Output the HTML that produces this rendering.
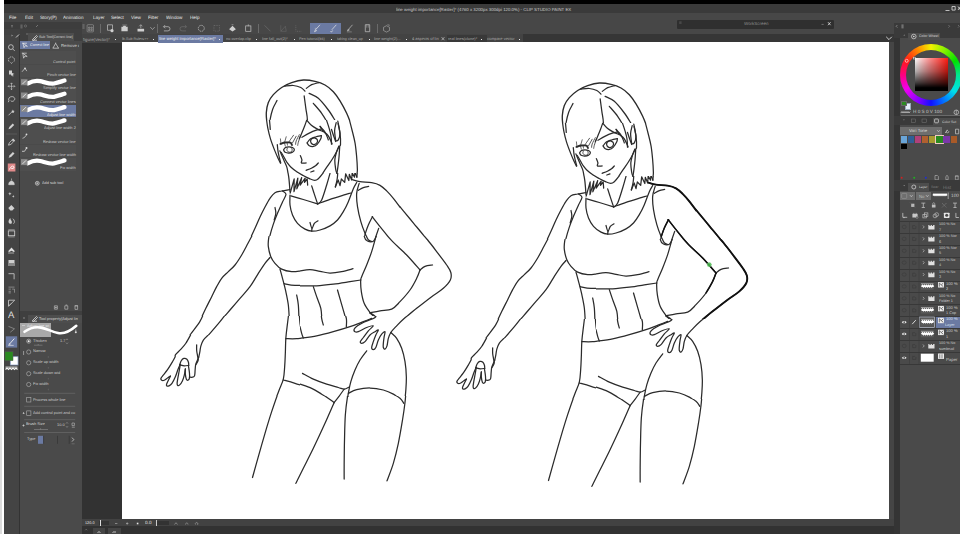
<!DOCTYPE html>
<html><head><meta charset="utf-8"><title>CLIP STUDIO PAINT</title>
<style>
*{margin:0;padding:0;box-sizing:border-box}
html,body{width:960px;height:534px;overflow:hidden;background:#333;font-family:"Liberation Sans",sans-serif;color:#ddd}
.a{position:absolute}
.t{position:absolute;white-space:nowrap;font-size:20px;line-height:23px;color:#d8d8d8;transform-origin:0 0;text-rendering:geometricPrecision}
svg{position:absolute;overflow:visible}
</style></head><body>
<!-- base blocks -->
<div class="a" style="left:0;top:0;width:960px;height:4px;background:#000"></div>
<div class="a" style="left:0;top:4px;width:960px;height:9px;background:#3a3a3a"></div>
<div class="a" style="left:0;top:13px;width:960px;height:21px;background:#474747"></div>
<div class="a" style="left:82px;top:34px;width:440.5px;height:8.5px;background:#434343"></div>
<div class="a" style="left:522.5px;top:34px;width:371.5px;height:8.5px;background:#363636"></div>
<div class="a" style="left:0;top:0;width:3.6px;height:534px;background:#fff"></div><div class="a" style="left:0;top:330px;width:1.6px;height:204px;background:linear-gradient(#fff,#dcdcdc 60%)"></div>
<div class="a" style="left:3.6px;top:22px;width:15.9px;height:512px;background:#444"></div>
<div class="a" style="left:19.5px;top:22px;width:62.5px;height:512px;background:#4a4a4a"></div>
<div class="a" style="left:82px;top:42.5px;width:40.5px;height:477px;background:#323232"></div>
<!-- canvas -->
<div class="a" style="left:122.3px;top:42.4px;width:766.9px;height:476.9px;background:#fff"></div>
<div class="a" style="left:889.2px;top:42.4px;width:4.7px;height:477px;background:#454545"></div>
<div class="a" style="left:82px;top:519.3px;width:812px;height:6.9px;background:#424242"></div>
<div class="a" style="left:82px;top:526px;width:818px;height:8px;background:#323232"></div>
<div class="a" style="left:893.9px;top:34px;width:6.1px;height:500px;background:#343434"></div>
<div class="a" style="left:900px;top:22.5px;width:60px;height:511.5px;background:#4a4a4a"></div>
<span class="t" style="left:395.80px;top:6.69px;transform:scale(0.2180);color:#cccccc;">line weight importance[Raster]* (4760 x 3200px 300dpi 120.0%) - CLIP STUDIO PAINT EX</span>
<svg style="left:944.0px;top:5.0px" width="16" height="7" viewBox="0 0 16 7" fill="none" stroke="#cfcfcf" stroke-width="1" ><path d="M1.5 5.5h4M8 1.5h3.2v3.6H8zM14 1.5l2.5 3.5M16.5 1.5L14 5" stroke="#ddd" stroke-width=".8"/></svg>
<span class="t" style="left:9.00px;top:15.25px;transform:scale(0.2300);color:#e6e6e6;">File</span>
<span class="t" style="left:24.50px;top:15.25px;transform:scale(0.2300);color:#e6e6e6;">Edit</span>
<span class="t" style="left:39.50px;top:15.25px;transform:scale(0.2300);color:#e6e6e6;">Story(P)</span>
<span class="t" style="left:63.00px;top:15.25px;transform:scale(0.2300);color:#e6e6e6;">Animation</span>
<span class="t" style="left:92.50px;top:15.25px;transform:scale(0.2300);color:#e6e6e6;">Layer</span>
<span class="t" style="left:110.50px;top:15.25px;transform:scale(0.2300);color:#e6e6e6;">Select</span>
<span class="t" style="left:130.50px;top:15.25px;transform:scale(0.2300);color:#e6e6e6;">View</span>
<span class="t" style="left:148.00px;top:15.25px;transform:scale(0.2300);color:#e6e6e6;">Filter</span>
<span class="t" style="left:165.50px;top:15.25px;transform:scale(0.2300);color:#e6e6e6;">Window</span>
<span class="t" style="left:190.00px;top:15.25px;transform:scale(0.2300);color:#e6e6e6;">Help</span>
<div class="a" style="left:4.0px;top:22.0px;width:78.0px;height:6.5px;background:#3d3d3d;"></div>
<div class="a" style="left:4.0px;top:28.5px;width:78.0px;height:6.0px;background:#414141;"></div>
<div class="a" style="left:310.0px;top:22.5px;width:31.0px;height:11.0px;background:#6b7aa2;"></div>
<div class="a" style="left:100.0px;top:23.5px;width:0.7px;height:9.5px;background:#6a6a6a;"></div>
<div class="a" style="left:157.2px;top:23.5px;width:0.7px;height:9.5px;background:#6a6a6a;"></div>
<div class="a" style="left:258.4px;top:23.5px;width:0.7px;height:9.5px;background:#6a6a6a;"></div>
<div class="a" style="left:377.2px;top:23.5px;width:0.7px;height:9.5px;background:#6a6a6a;"></div>
<svg style="left:0.0px;top:0.0px" width="960" height="534" viewBox="0 0 960 534" fill="none" stroke="#cfcfcf" stroke-width="1" ><g stroke-width=".7" stroke="#c4c4c4"><g transform="translate(90.3,28.3)" opacity="1"><rect x="-3.2" y="-3.6" width="6.4" height="7.2" rx=".8" stroke-width=".4"/><path d="M-1.8 -1.2h1.4v1.2h-1.4zM.6 -1.2h1.4v1.2H.6zM-1.8 1h1.4v1.2h-1.4zM.6 1h1.4v1.2H.6z" stroke-width=".4"/></g><g transform="translate(110.0,28.3)" opacity="1"><path d="M-2.5 -3.5h5v5.5h-5z"/><circle cx="2" cy="2.4" r="1.6" fill="#cfcfcf" stroke="none"/></g><g transform="translate(124.7,28.3)" opacity="1"><path d="M-3.3 3v-4.5h1.5l.6-1h2l.6 1h1.6V3z" fill="#cfcfcf" stroke="none"/><path d="M-2.5 -3.3h5" stroke-width=".4"/></g><g transform="translate(140.8,28.3)" opacity="1"><path d="M-3.3 3.2V.5h6.6v2.7z" fill="#cfcfcf" stroke="none"/><path d="M0 -3.5v3.5M-1.6 -2l1.6-1.6L1.6 -2" stroke-width=".6"/></g><g transform="translate(152.5,28.3)" opacity="1"><path d="M-2.2 -1.2L0 1.2l2.2-2.4" stroke-width=".6"/></g><g transform="translate(166.7,28.3)" opacity="1"><path d="M-3 -1.6h4.2a2 2 0 010 4.2h-4M-1.6 -3.2L-3.2 -1.6l1.6 1.6" stroke-width=".7"/></g><g transform="translate(183.3,28.3)" opacity="0.3"><path d="M3 -1.6h-4.2a2 2 0 000 4.2h4M1.6 -3.2L3.2 -1.6 1.6 0" stroke-width=".7"/></g><g transform="translate(201.3,28.3)" opacity="1"><circle r="3" stroke-dasharray="1.6 .7" stroke-width=".7"/></g><g transform="translate(216.7,28.3)" opacity="0.3"><rect x="-2.8" y="-2.8" width="5.6" height="5.6" stroke-dasharray="1.4 1"/></g><g transform="translate(232.5,28.3)" opacity="1"><path d="M-3.4 1l3.4-3.6L3.4 1 0 3.2z" fill="#cfcfcf" stroke="none"/><path d="M-1 -3.6h2" stroke-width=".5"/></g><g transform="translate(248.3,28.3)" opacity="1"><rect x="-2.6" y="-2.4" width="5.2" height="5.4"/><path d="M0 -4v2" stroke-width=".6"/></g><g transform="translate(267.5,28.3)" opacity="0.3"><path d="M-3 -3l6 6"/></g><g transform="translate(283.3,28.3)" opacity="0.3"><path d="M-2.5 3h5.5l-1-5z M-2.5 -3v6" stroke-width=".5"/></g><g transform="translate(298.3,28.3)" opacity="0.3"><path d="M-2.5 -3v6h5.5" stroke-dasharray="1 .8"/></g><g transform="translate(317.5,28.3)" opacity="1"><path d="M-2 1.5l4.5-5M-3 3.4l1-2 1 1z" stroke="#e6e6e6" stroke-width=".7"/><path d="M-2.8 0h2" stroke="#e6e6e6" stroke-width=".4"/></g><g transform="translate(333.3,28.3)" opacity="1"><path d="M-1.5 1.5l4.5-5M-3 2.8c.5 1 2 1 2.4-.6" stroke="#e6e6e6" stroke-width=".7"/></g><g transform="translate(350.0,28.3)" opacity="1"><path d="M-1.5 1l4-4.5M-2.6 2.6l1-1.8 1 1z" stroke-width=".7"/><path d="M-3.2 3.6h5" stroke-width=".4"/></g><g transform="translate(367.5,28.3)" opacity="1"><path d="M-2.2 -3.6h4.4v7h-4.4z"/><path d="M-.8 -3.6v3M.8 -3.6v3" stroke-width=".4"/></g><g transform="translate(386.5,28.3)" opacity="1"><path d="M-3 -1l3-1.6 3 1.6v3.2L0 3.8l-3-1.6z M1 -3.6l2.2.6" stroke-width=".5"/></g></g></svg>
<div class="a" style="left:157.5px;top:35.0px;width:65.5px;height:7.5px;background:#6b7aa2;"></div>
<div class="a" style="left:446.5px;top:34.6px;width:40.5px;height:7.9px;background:#393939;"></div>
<span class="t" style="left:83.30px;top:36.69px;transform:scale(0.2100);color:#a8a8a8;">figure(Vector)*</span>
<div class="a" style="left:115.2px;top:38.5px;width:1.3px;height:1.3px;background:#e8e8e8;"></div>
<span class="t" style="left:121.70px;top:36.97px;transform:scale(0.1850);color:#a8a8a8;">lb.Sub Rulers++</span>
<div class="a" style="left:152.7px;top:38.5px;width:1.3px;height:1.3px;background:#e8e8e8;"></div>
<span class="t" style="left:159.00px;top:36.74px;transform:scale(0.2052);color:#f0f0f0;">line weight importance[Raster]*</span>
<div class="a" style="left:219.1px;top:38.5px;width:1.3px;height:1.3px;background:#e8e8e8;"></div>
<span class="t" style="left:225.80px;top:36.87px;transform:scale(0.1939);color:#a8a8a8;">no overlap.clip</span>
<div class="a" style="left:256.1px;top:38.5px;width:1.3px;height:1.3px;background:#e8e8e8;"></div>
<span class="t" style="left:261.70px;top:36.88px;transform:scale(0.1934);color:#a8a8a8;">line fall_out(2)*</span>
<div class="a" style="left:293.6px;top:38.5px;width:1.3px;height:1.3px;background:#e8e8e8;"></div>
<span class="t" style="left:299.20px;top:36.91px;transform:scale(0.1903);color:#a8a8a8;">Pen tutorial(bk)</span>
<div class="a" style="left:331.1px;top:38.5px;width:1.3px;height:1.3px;background:#e8e8e8;"></div>
<span class="t" style="left:336.70px;top:36.97px;transform:scale(0.1850);color:#a8a8a8;">taking clean_up</span>
<div class="a" style="left:368.6px;top:38.5px;width:1.3px;height:1.3px;background:#e8e8e8;"></div>
<span class="t" style="left:374.20px;top:36.84px;transform:scale(0.1962);color:#a8a8a8;">line weight(2)...</span>
<div class="a" style="left:406.1px;top:38.5px;width:1.3px;height:1.3px;background:#e8e8e8;"></div>
<span class="t" style="left:411.70px;top:36.81px;transform:scale(0.1994);color:#a8a8a8;">4 aspects of lin</span>
<div class="a" style="left:442.4px;top:38.5px;width:1.3px;height:1.3px;background:transparent;"></div>
<span class="t" style="left:448.30px;top:36.85px;transform:scale(0.1960);color:#a8a8a8;">real lines(clone)*</span>
<div class="a" style="left:481.1px;top:38.5px;width:1.3px;height:1.3px;background:#e8e8e8;"></div>
<span class="t" style="left:486.70px;top:36.81px;transform:scale(0.1995);color:#a8a8a8;">compare vector</span>
<div class="a" style="left:518.6px;top:38.5px;width:1.3px;height:1.3px;background:#e8e8e8;"></div>
<svg style="left:440.0px;top:36.0px" width="6" height="6" viewBox="0 0 6 6" fill="none" stroke="#cfcfcf" stroke-width="1" ><path d="M1.6 1.2l2.8 3M4.4 1.2L1.6 4.2" stroke="#ccc" stroke-width=".7"/></svg>
<div class="a" style="left:677.0px;top:19.5px;width:157.0px;height:9.3px;background:#2f2f2f;border-radius:1px"></div>
<span class="t" style="left:743.50px;top:21.43px;transform:scale(0.2234);color:#8a8a8a;">WorkScreen</span>
<svg style="left:820.0px;top:21.0px" width="14" height="6" viewBox="0 0 14 6" fill="none" stroke="#cfcfcf" stroke-width="1" ><path d="M1.5 3.4h2.2" stroke="#999" stroke-width=".6"/><path d="M8 1.2l2.6 3M10.6 1.2L8 4.2" stroke="#ddd" stroke-width=".8"/></svg>
<svg style="left:678.0px;top:21.0px" width="6" height="4" viewBox="0 0 6 4" fill="none" stroke="#cfcfcf" stroke-width="1" ><path d="M1.2 1h2.4M1.2 2.2h2.4" stroke="#777" stroke-width=".5"/></svg>
<svg style="left:884.0px;top:35.0px" width="10" height="7" viewBox="0 0 10 7" fill="none" stroke="#cfcfcf" stroke-width="1" ><path d="M2.2 1.8L5 4.6l2.8-2.8" stroke="#ddd" stroke-width=".9"/></svg>
<span class="t" style="left:85.00px;top:520.82px;transform:scale(0.1898);color:#e0e0e0;">120.0</span>
<div class="a" style="left:98.7px;top:520.6px;width:10.0px;height:4.6px;background:#333;"></div>
<div class="a" style="left:100.0px;top:520.2px;width:0.6px;height:5.4px;background:#ddd;"></div>
<div class="a" style="left:156.0px;top:520.6px;width:12.7px;height:4.6px;background:#333;"></div>
<div class="a" style="left:156.0px;top:520.2px;width:0.6px;height:5.4px;background:#ccc;"></div>
<span class="t" style="left:144.50px;top:520.31px;transform:scale(0.2338);color:#e0e0e0;">0.0</span>
<svg style="left:82.0px;top:519.5px" width="130" height="7" viewBox="0 0 130 7" fill="none" stroke="#cfcfcf" stroke-width="1" ><path d="M33 3.5h2.4M44 3.5h2.4M45.200 2.300v2.400" stroke="#bbb" stroke-width=".6"/><rect x="54.800" y="2.700" width="1.600" height="1.600" fill="#e8e8e8" stroke="none"/><path d="M92.500 4.500l1.500-1.800 1.500 1.800M103.500 4.500c0-2 2.500-2 2.500 0M113.500 4.500a1.300 1.300 0 112 .3" stroke="#aaa" stroke-width=".6"/></svg>
<div class="a" style="left:92.5px;top:528.0px;width:12.5px;height:6.0px;background:#454545;"></div>
<div class="a" style="left:108.0px;top:528.0px;width:13.0px;height:6.0px;background:#454545;"></div>
<svg style="left:82.0px;top:526.0px" width="40" height="8" viewBox="0 0 40 8" fill="none" stroke="#cfcfcf" stroke-width="1" ><path d="M3.200 4.300l1-1.200 1 1.200" stroke="#888" stroke-width=".5"/><path d="M15 6.500h4M16 5.500h2M30 6.500h4M31 5.500h3" stroke="#aaa" stroke-width=".6"/></svg>
<div class="a" style="left:19.5px;top:28.5px;width:62.5px;height:12.3px;background:#3f3f3f;"></div>
<div class="a" style="left:28.3px;top:33.3px;width:45.7px;height:7.5px;background:#4d4d4d;"></div>
<span class="t" style="left:39.00px;top:34.56px;transform:scale(0.1771);color:#d0d0d0;">Sub Tool[Correct line]</span>
<svg style="left:31.0px;top:33.5px" width="8" height="7" viewBox="0 0 8 7" fill="none" stroke="#cfcfcf" stroke-width="1" ><path d="M1.5 5.5l4-4 1 1-4 4zM1 6.2h5" stroke="#d8d8d8" stroke-width=".8"/></svg>
<svg style="left:4.0px;top:22.0px" width="80" height="20" viewBox="0 0 80 20" fill="none" stroke="#cfcfcf" stroke-width="1" ><path d="M7 3.5h2M7 4.8h2M17 2.5v4M18 2.5v4" stroke="#888" stroke-width=".6"/><circle cx="21.5" cy="4" r="1.1" stroke="#888" stroke-width=".5"/><path d="M32 5l2-2" stroke="#999" stroke-width=".6"/><path d="M79 2v5M80 2v5" stroke="#888" stroke-width=".5"/><path d="M7.5 12.5l1.5 1-1.5 1z" fill="#999" stroke="none"/><path d="M12 15.5l3-3" stroke="#ccc" stroke-width="1"/><path d="M22 12h2" stroke="#999" stroke-width=".6"/></svg>
<div class="a" style="left:20.3px;top:40.8px;width:29.7px;height:8.4px;background:#6b7aa2;"></div>
<span class="t" style="left:30.00px;top:42.84px;transform:scale(0.1878);color:#f0f0f0;">Correct line</span>
<svg style="left:21.0px;top:41.5px" width="8" height="7" viewBox="0 0 8 7" fill="none" stroke="#cfcfcf" stroke-width="1" ><path d="M1 1.2h5M2 1.2l1 4.5 1.2-2 2.2.6z" stroke="#e8e8e8" stroke-width=".7"/></svg>
<svg style="left:52.0px;top:41.5px" width="8" height="7" viewBox="0 0 8 7" fill="none" stroke="#cfcfcf" stroke-width="1" ><path d="M1 6l2.6-4.6L6.4 6M.6 6.2h6.4M3.7 .6v1" stroke="#d8d8d8" stroke-width=".7"/></svg>
<span class="t" style="left:60.80px;top:42.54px;transform:scale(0.2139);color:#d0d0d0;clip-path:inset(0 29% 0 0);">Remove dust</span>
<div class="a" style="left:20.3px;top:51.4px;width:55.9px;height:12.5px;background:#4e4e4e;"></div>
<span class="t" style="left:53.41px;top:59.56px;transform:scale(0.1975);color:#c8c8c8;">Control point</span>
<div class="a" style="left:20.3px;top:64.7px;width:55.9px;height:12.5px;background:#4e4e4e;"></div>
<span class="t" style="left:46.82px;top:72.89px;transform:scale(0.1975);color:#c8c8c8;">Pinch vector line</span>
<div class="a" style="left:20.3px;top:78.1px;width:55.9px;height:12.5px;background:#4e4e4e;"></div>
<span class="t" style="left:42.87px;top:86.22px;transform:scale(0.1975);color:#c8c8c8;">Simplify vector line</span>
<div class="a" style="left:20.3px;top:91.4px;width:55.9px;height:12.5px;background:#4e4e4e;"></div>
<span class="t" style="left:40.01px;top:99.55px;transform:scale(0.1975);color:#c8c8c8;">Connect vector lines</span>
<div class="a" style="left:20.3px;top:104.7px;width:55.9px;height:12.5px;background:#6b7aa2;"></div>
<span class="t" style="left:47.26px;top:112.88px;transform:scale(0.1975);color:#e8e8e8;">Adjust line width</span>
<div class="a" style="left:20.3px;top:118.0px;width:55.9px;height:12.5px;background:#4e4e4e;"></div>
<span class="t" style="left:43.96px;top:126.21px;transform:scale(0.1975);color:#c8c8c8;">Adjust line width 2</span>
<div class="a" style="left:20.3px;top:131.4px;width:55.9px;height:12.5px;background:#4e4e4e;"></div>
<span class="t" style="left:43.09px;top:139.54px;transform:scale(0.1975);color:#c8c8c8;">Redraw vector line</span>
<div class="a" style="left:20.3px;top:144.7px;width:55.9px;height:12.5px;background:#4e4e4e;"></div>
<span class="t" style="left:32.77px;top:152.87px;transform:scale(0.1975);color:#c8c8c8;">Redraw vector line width</span>
<div class="a" style="left:20.3px;top:158.0px;width:55.9px;height:12.5px;background:#4e4e4e;"></div>
<span class="t" style="left:60.22px;top:166.20px;transform:scale(0.1975);color:#c8c8c8;">Fix width</span>
<svg style="left:0.0px;top:0.0px" width="960" height="534" viewBox="0 0 960 534" fill="none" stroke="#cfcfcf" stroke-width="1" ><path d="M21.8 53.2h5M22.8 53.2l.8 5 1.3-2.2 2.3.5z" stroke="#ddd" stroke-width=".7"/><path d="M22 71.8l3-3.5 1.8 2.8" stroke="#ddd" stroke-width=".7"/><circle cx="25" cy="68.3" r=".9" fill="#ddd" stroke="none"/><path d="M28 83.3C32 81.1 36 80.3 40 81.1S50 84.3 54 83.5S62 81.2 64.5 80.5" stroke="#fff" stroke-width="4.3" stroke-linecap="round"/><rect x="21" y="79.2" width="6.5" height="6" fill="#8a8a8a" stroke="none"/><path d="M22.5 84.0l3.5-3.5" stroke="#e0e0e0" stroke-width="1"/><path d="M28 96.6C32 94.4 36 93.6 40 94.4S50 97.6 54 96.8S62 94.5 64.5 93.8" stroke="#fff" stroke-width="4.3" stroke-linecap="round"/><rect x="21" y="92.5" width="6.5" height="6" fill="#8a8a8a" stroke="none"/><path d="M22.5 97.3l3.5-3.5" stroke="#e0e0e0" stroke-width="1"/><path d="M28 109.9C32 107.7 36 106.9 40 107.7S50 110.9 54 110.1S62 107.8 64.5 107.1" stroke="#fff" stroke-width="4.3" stroke-linecap="round"/><rect x="21" y="105.8" width="6.5" height="6" fill="#8a8a8a" stroke="none"/><path d="M22.5 110.6l3.5-3.5" stroke="#e0e0e0" stroke-width="1"/><path d="M28 123.2C32 121.0 36 120.2 40 121.0S50 124.2 54 123.4S62 121.1 64.5 120.4" stroke="#fff" stroke-width="4.3" stroke-linecap="round"/><rect x="21" y="119.1" width="6.5" height="6" fill="#8a8a8a" stroke="none"/><path d="M22.5 123.9l3.5-3.5" stroke="#e0e0e0" stroke-width="1"/><path d="M22.5 138.3c2-.5 3.5-2 4-4" stroke="#ddd" stroke-width=".7"/><circle cx="26.5" cy="134.3" r=".9" fill="#ddd" stroke="none"/><path d="M22 151.3h2.5l2-3" stroke="#ddd" stroke-width=".8"/><circle cx="26.5" cy="147.9" r="1" fill="#ddd" stroke="none"/><path d="M28 163.2C32 161.0 36 160.2 40 161.0S50 164.2 54 163.4S62 161.1 64.5 160.4" stroke="#fff" stroke-width="4.3" stroke-linecap="round"/><rect x="21" y="159.1" width="6.5" height="6" fill="#8a8a8a" stroke="none"/><path d="M22.5 163.9l3.5-3.5" stroke="#e0e0e0" stroke-width="1"/></svg>
<svg style="left:35.0px;top:180.5px" width="5" height="5" viewBox="0 0 5 5" fill="none" stroke="#cfcfcf" stroke-width="1" ><circle cx="2.3" cy="2.3" r="1.9" stroke="#e0e0e0" stroke-width=".7"/><path d="M2.3 1.2v2.2M1.2 2.3h2.2" stroke="#e0e0e0" stroke-width=".6"/></svg>
<span class="t" style="left:41.70px;top:180.70px;transform:scale(0.1916);color:#d0d0d0;">Add sub tool</span>
<svg style="left:52.0px;top:304.0px" width="30" height="7" viewBox="0 0 30 7" fill="none" stroke="#cfcfcf" stroke-width="1" ><path d="M2.4 1.8h3v3.4h-3zM3.9 2.6v1.8M3 3.5h1.8M12.8 1.8h3v3.4h-3zM13.6 1h1.6M23 1.8h2.6v3.6H23zM22.6 1.8h3.4" stroke="#c8c8c8" stroke-width=".6"/></svg>
<div class="a" style="left:19.5px;top:311.3px;width:62.5px;height:11.5px;background:#3f3f3f;"></div>
<div class="a" style="left:28.3px;top:314.5px;width:53.7px;height:8.3px;background:#4d4d4d;"></div>
<svg style="left:21.0px;top:314.0px" width="14" height="9" viewBox="0 0 14 9" fill="none" stroke="#cfcfcf" stroke-width="1" ><path d="M2.2 3.2l1.6 1.6M3.8 3.2L2.2 4.8" stroke="#999" stroke-width=".5"/></svg>
<svg style="left:31.0px;top:315.0px" width="8" height="7" viewBox="0 0 8 7" fill="none" stroke="#cfcfcf" stroke-width="1" ><path d="M1.5 5.5l4-4 1 1-4 4zM1 6.2h5" stroke="#d8d8d8" stroke-width=".8"/></svg>
<span class="t" style="left:39.20px;top:316.59px;transform:scale(0.1918);color:#d0d0d0;">Tool property[Adjust lin</span>
<div class="a" style="left:20.3px;top:322.7px;width:56.0px;height:14.0px;background:#4a4a4a;"></div>
<div class="a" style="left:20.3px;top:322.7px;width:30.5px;height:14.0px;background:#a9a9a9;"></div>
<span class="t" style="left:27.00px;top:323.83px;transform:scale(0.1885);color:#e8e8e8;">Adjust line wi</span>
<svg style="left:0.0px;top:0.0px" width="960" height="534" viewBox="0 0 960 534" fill="none" stroke="#cfcfcf" stroke-width="1" ><path d="M24.5 331.8C29 328.5 35 326.6 41 327.6S52 331.8 58 333S71 330.5 76.3 325.8" stroke="#fff" stroke-width="2.6" stroke-linecap="round"/><circle cx="75.8" cy="332.2" r="1" fill="#ddd" stroke="none"/><path d="M75.8 329.5v2" stroke="#ddd" stroke-width=".6"/><path d="M22 325.5h3" stroke="#ddd" stroke-width=".6"/></svg>
<span class="t" style="left:33.30px;top:338.66px;transform:scale(0.1950);color:#cccccc;">Thicken</span>
<span class="t" style="left:33.30px;top:349.46px;transform:scale(0.1950);color:#cccccc;">Narrow</span>
<span class="t" style="left:33.30px;top:360.26px;transform:scale(0.1950);color:#cccccc;">Scale up width</span>
<span class="t" style="left:33.30px;top:371.16px;transform:scale(0.1950);color:#cccccc;">Scale down wid</span>
<span class="t" style="left:33.30px;top:381.96px;transform:scale(0.1950);color:#cccccc;">Fix width</span>
<span class="t" style="left:59.50px;top:339.06px;transform:scale(0.1950);color:#cccccc;">1.7</span>
<span class="t" style="left:33.30px;top:397.76px;transform:scale(0.1950);color:#cccccc;">Process whole line</span>
<span class="t" style="left:33.30px;top:411.06px;transform:scale(0.1950);color:#cccccc;">Add control point and co</span>
<span class="t" style="left:26.30px;top:422.26px;transform:scale(0.1950);color:#d4d4d4;">Brush Size</span>
<span class="t" style="left:56.50px;top:422.56px;transform:scale(0.1950);color:#cccccc;">10.0</span>
<span class="t" style="left:26.70px;top:437.26px;transform:scale(0.1950);color:#cccccc;">Type</span>
<svg style="left:0.0px;top:0.0px" width="960" height="534" viewBox="0 0 960 534" fill="none" stroke="#cfcfcf" stroke-width="1" ><circle cx="28.7" cy="341.2" r="2.1" stroke="#b8b8b8" stroke-width=".6" fill="#5a5a5a"/><circle cx="28.7" cy="341.2" r="1" fill="#f0f0f0" stroke="none"/><circle cx="28.7" cy="352.0" r="2.1" stroke="#b8b8b8" stroke-width=".6" fill="#484848"/><path d="M48.3 356.2v1.6" stroke="#777" stroke-width=".5"/><circle cx="28.7" cy="362.8" r="2.1" stroke="#b8b8b8" stroke-width=".6" fill="#484848"/><path d="M48.3 367.0v1.6" stroke="#777" stroke-width=".5"/><circle cx="28.7" cy="373.7" r="2.1" stroke="#b8b8b8" stroke-width=".6" fill="#484848"/><path d="M48.3 377.9v1.6" stroke="#777" stroke-width=".5"/><circle cx="28.7" cy="384.5" r="2.1" stroke="#b8b8b8" stroke-width=".6" fill="#484848"/><path d="M48.3 388.7v1.6" stroke="#777" stroke-width=".5"/><path d="M34 345.2h8.5M38.2 344v1.2" stroke="#999" stroke-width=".5"/><path d="M66 340l1-1.2 1 1.2M66 342.6l1 1.2 1-1.2" stroke="#aaa" stroke-width=".5"/><path d="M23.6 351v4" stroke="#ccc" stroke-width=".6"/><path d="M24.2 393.3h51" stroke="#6e6e6e" stroke-width=".6"/><path d="M24.2 406.3h51" stroke="#6e6e6e" stroke-width=".6"/><path d="M24.2 419.7h51" stroke="#6e6e6e" stroke-width=".6"/><path d="M24.2 432.5h51" stroke="#6e6e6e" stroke-width=".6"/><rect x="26.7" y="397.6" width="4.2" height="4.4" stroke="#b0b0b0" stroke-width=".6" fill="#484848"/><rect x="26.7" y="410.9" width="4.2" height="4.4" stroke="#b0b0b0" stroke-width=".6" fill="#484848"/><path d="M22.6 413.8l1-1.8 1 1.8z" fill="#ddd" stroke="none"/><path d="M22.4 425.5h2.2M23.5 424.4v2.2" stroke="#ddd" stroke-width=".6"/><path d="M34 429.5h14M40.6 428.2v1.3" stroke="#999" stroke-width=".5"/><path d="M66 423.6l1-1.2 1 1.2M66 426.2l1 1.2 1-1.2" stroke="#aaa" stroke-width=".5"/><path d="M72 423h2.4v2.6H72zM71.8 427.2h3" stroke="#bbb" stroke-width=".6"/><rect x="38" y="435.8" width="5.3" height="8" fill="#6b7aa2" stroke="none"/><path d="M43.6 435.8v8M57.5 435.8v8M69.2 435.8v8" stroke="#333" stroke-width=".7"/><path d="M72 437.6l1.8 2-1.8 2" stroke="#ddd" stroke-width=".7"/><path d="M71.6 443.8h3" stroke="#888" stroke-width=".5"/></svg>
<svg style="left:0.0px;top:0.0px" width="960" height="534" viewBox="0 0 960 534" fill="none" stroke="#cfcfcf" stroke-width="1" ><g transform="translate(11.5,47.7)" opacity="1"><circle cx="-.6" cy="-.6" r="2.4" stroke="#d0d0d0" stroke-width=".8"/><path d="M1.2 1.2l2 2" stroke="#d0d0d0" stroke-width=".8"/></g><g transform="translate(11.5,60.0)" opacity="1"><path d="M-2.5 1.5a3 3 0 115 0" stroke="#d0d0d0" stroke-width=".8" stroke-dasharray="1.5 .8"/><path d="M-1 2.5l1 .8 1-.8" stroke="#d0d0d0" stroke-width=".8"/></g><g transform="translate(11.5,73.0)" opacity="1"><path d="M-2.5 -2.5h3v4h-3zM-.5 -.5l3.5 1.5-1.6.6L2 3.2l-.8.4-.6-1.6-1.1 1z" fill="#d0d0d0" stroke="none"/></g><g transform="translate(11.5,86.3)" opacity="1"><path d="M0 -3.4v6.8M-3.4 0h6.8M-1 -2.4l1-1 1 1M-1 2.4l1 1 1-1M-2.4 -1l-1 1 1 1M2.4 -1l1 1-1 1" stroke="#d0d0d0" stroke-width=".6"/></g><g transform="translate(11.5,99.0)" opacity="1"><path d="M-2.6 1.6c-1-2 .6-4 3-4s3.6 2 2.4 3.6-3 1.4-3.6.4" stroke="#d0d0d0" stroke-width=".8"/><path d="M-2.6 1.600l-.6 1.600" stroke="#d0d0d0" stroke-width=".8"/></g><g transform="translate(11.5,112.3)" opacity="1"><path d="M-3 3l3.4-3.4" stroke="#d0d0d0" stroke-width=".8"/><path d="M1.4 -2.8l.5 1.200 1.300.2-1 .9.300 1.300-1.100-.700-1.100.700.300-1.300-1-.9 1.300-.2z" fill="#d0d0d0" stroke="none"/></g><g transform="translate(11.5,126.0)" opacity="1"><path d="M-3 3.2l.8-2.200 3.400-3.600 1.500 1.500-3.500 3.500z" fill="#d0d0d0" stroke="none"/></g><path d="M6 134h11" stroke="#6a6a6a" stroke-width=".6"/><g transform="translate(11.5,142.0)" opacity="1"><path d="M-3 3.200l.8-2.400 2.600-2.600 1.600 1.600-2.600 2.600zM.8 -2.200l1.600 1.600" stroke="#d0d0d0" stroke-width=".8"/><path d="M.4 -2.600l1.200-1 2 2-1 1.200z" fill="#d0d0d0" stroke="none"/></g><g transform="translate(11.5,155.0)" opacity="1"><path d="M-3 3.200l1.200-3 3.200-3.200 1.600 1.600-3.200 3.200z" fill="#d0d0d0" stroke="none"/><path d="M-3 3.200l1-1" stroke="#444" stroke-width=".5"/></g><rect x="7.800" y="163.500" width="7.600" height="8" fill="#e08a8a" stroke="none"/><path d="M9.500 169.500c1.500-4 4-4 4.500-2.500s-2 2-3 1" stroke="#fff" stroke-width=".9"/><g transform="translate(11.5,181.7)" opacity="1"><path d="M0 -3.200v2M-2.800 3c0-2.400 1.200-3.600 2.800-3.600s2.800 1.200 2.800 3.600z" fill="#d0d0d0" stroke="#d0d0d0" stroke-width=".6"/></g><g transform="translate(11.5,194.7)" opacity="1"><path d="M-1.600 -2.600l.5 1.200 1.200.5-1.200.5-.5 1.200-.5-1.200-1.200-.5 1.200-.5zM1.800 .4l.4.900.9.400-.9.400-.4.900-.4-.9-.9-.4.900-.4z" fill="#d0d0d0" stroke="none"/></g><g transform="translate(11.5,207.3)" opacity="1"><path d="M-3.200 .8l3-3 3.200 3.200-2.200 2.200h-2z" fill="#d0d0d0" stroke="none"/></g><g transform="translate(11.5,220.7)" opacity="1"><path d="M-1.600 3c-2-1-1.600-3.600.4-5.800 0 2 1.600 2.400 1.600 4.200s-1 2-2 1.600z" fill="#d0d0d0" stroke="none"/><path d="M1.400 -2c1.600 1.400 2.200 3.600 .6 5" stroke="#d0d0d0" stroke-width=".8"/></g><g transform="translate(11.5,233.3)" opacity="1"><rect x="-3.200" y="-2.400" width="6.400" height="4.800" stroke="#d0d0d0" stroke-width=".8"/><path d="M-3.200 -3.600h6.400M-3.200 3.600h6.400" stroke="#d0d0d0" stroke-width=".5"/></g><g transform="translate(11.5,250.0)" opacity="1"><path d="M-3.400 1.200l3.400-3.600 3.400 3.600-1 .8-2.400-1.200-2.400 1.200z" fill="#e0e0e0" stroke="none"/><path d="M-3.400 3h6" stroke="#d0d0d0" stroke-width=".7"/></g><g transform="translate(11.5,263.0)" opacity="1"><rect x="-3" y="-3" width="6" height="6" fill="#cfcfcf" stroke="none"/><rect x="-3" y="0" width="6" height="3" fill="#8a8a8a" stroke="none"/></g><g transform="translate(11.5,276.3)" opacity="1"><path d="M-3 -2.600h5.600v5.600" stroke="#d0d0d0" stroke-width=".8"/></g><g transform="translate(11.5,289.7)" opacity="1"><path d="M-3 -2.600h6M-3 -.6h2.400M.6 -.6h2.400v3.600M-3 1.600h2.400M-3 3.200h2.400" stroke="#b0b0b0" stroke-width=".6"/></g><g transform="translate(11.5,303.0)" opacity="1"><path d="M-3 3.200v-6h6.200z" stroke="#d0d0d0" stroke-width=".8"/><path d="M-3 3.200l3-3" stroke="#d0d0d0" stroke-width=".5"/></g><rect x="5.800" y="336.300" width="11.400" height="11.300" fill="#6b7aa2" stroke="none"/><g transform="translate(11.5,329.0)" opacity="1"><path d="M-3 -2.600l6 2.400-4.200 3.400" stroke="#9a9a9a" stroke-width=".7"/></g><g transform="translate(11.5,342.0)" opacity="1"><path d="M-1.600 1.600l4.400-5" stroke="#f0f0f0" stroke-width=".9"/><path d="M-3.400 3.400h5.600M-2.600 2.800l.6-1.600 1 1z" stroke="#f0f0f0" stroke-width=".6"/></g><rect x="10.300" y="356.700" width="7.700" height="8.300" fill="#fff" stroke="#8ea0c8" stroke-width=".7"/><rect x="5" y="351.700" width="8" height="9" fill="#2a8a20" stroke="#555" stroke-width=".5"/><path d="M5.500 369.500l1.500-1.500 1.500 1.500 1.500-1.500 1.500 1.500 1.500-1.500 1.500 1.500 1.500-1.500 1.500 1.500" stroke="#f4f4f4" stroke-width="1.200"/><rect x="5.500" y="366.600" width="12" height="1" fill="#e0e0e0" stroke="none"/></svg>
<span class="t" style="left:8.30px;top:310.24px;transform:scale(0.4750);color:#dcdcdc;">A</span>
<div class="a" style="left:894.0px;top:22.5px;width:66.0px;height:15.8px;background:#3a3a3a;"></div>
<svg style="left:894.0px;top:23.0px" width="66" height="9" viewBox="0 0 66 9" fill="none" stroke="#cfcfcf" stroke-width="1" ><path d="M3.4 2l-1.300 1.300 1.300 1.300M8 1.400v4M9 1.400v4" stroke="#aaa" stroke-width=".6"/><path d="M54.400 2l1.300 1.300-1.300 1.300M64 2l1.300 1.300-1.300 1.300" stroke="#888" stroke-width=".6"/></svg>
<div class="a" style="left:908.3px;top:33.3px;width:31.7px;height:6.4px;background:#4d4d4d;"></div>
<svg style="left:902.0px;top:33.0px" width="14" height="7" viewBox="0 0 14 7" fill="none" stroke="#cfcfcf" stroke-width="1" ><path d="M1.400 2.600l.9-1.200.9 1.200z" fill="#999" stroke="none"/><circle cx="11.800" cy="3.500" r="2.300" stroke="#ddd" stroke-width=".7"/><circle cx="11.800" cy="3.500" r=".8" fill="#ddd" stroke="none"/></svg>
<span class="t" style="left:919.20px;top:34.46px;transform:scale(0.1772);color:#d0d0d0;">Color Wheel</span>
<div class="a" style="left:900.2px;top:44px;width:62px;height:62px;border-radius:50%;background:conic-gradient(from 0deg at 50% 50%,#f2f200 0deg,#7ff000 30deg,#00e000 60deg,#00e890 90deg,#00e0e8 125deg,#0080ff 150deg,#1010ff 180deg,#8000ff 205deg,#f000f0 240deg,#ff0080 270deg,#ff1a1a 300deg,#ff8000 330deg,#f2f200 360deg)"></div>
<div class="a" style="left:905.9px;top:49.700px;width:50.6px;height:50.6px;border-radius:50%;background:#4a4a4a"></div>
<div class="a" style="left:915px;top:57.800px;width:33px;height:33.2px;background:linear-gradient(to bottom,rgba(0,0,0,0) 0%,rgba(0,0,0,.3) 40%,rgba(0,0,0,.75) 75%,#000 90%,#000 100%),linear-gradient(to right,#fff 0%,#ff9a9a 40%,#ff1a10 100%)"></div>
<svg style="left:900.0px;top:40.0px" width="60" height="70" viewBox="0 0 60 70" fill="none" stroke="#cfcfcf" stroke-width="1" ><circle cx="6.700" cy="20.800" r="1.500" stroke="#fff" stroke-width=".6"/><rect x="13.600" y="17.200" width="1.800" height="1.800" stroke="#eee" stroke-width=".5"/></svg>
<div class="a" style="left:905.0px;top:103.2px;width:5.8px;height:6.6px;background:#e6eef8;border:0.6px solid #9ab"></div>
<div class="a" style="left:901.3px;top:100.7px;width:5.4px;height:5.8px;background:#2a8a20;border:0.5px solid #666"></div>
<svg style="left:900.0px;top:110.0px" width="12" height="4" viewBox="0 0 12 4" fill="none" stroke="#cfcfcf" stroke-width="1" ><path d="M1 2.800l1-1.200 1 1.200 1-1.200 1 1.200 1-1.200 1 1.200 1-1.200 1 1.200 1-1.200" stroke="#eee" stroke-width=".8"/></svg>
<span class="t" style="left:913.30px;top:109.12px;transform:scale(0.2331);color:#c8c8c8;">H   0 S   0 V 100</span>
<svg style="left:952.5px;top:108.5px" width="7" height="7" viewBox="0 0 7 7" fill="none" stroke="#cfcfcf" stroke-width="1" ><circle cx="3.300" cy="3.300" r="2.300" stroke="#ccc" stroke-width=".7"/><path d="M3.300 1v4.600" stroke="#ccc" stroke-width=".6"/></svg>
<div class="a" style="left:900.5px;top:114.8px;width:59.5px;height:0.6px;background:#6a6a6a;"></div>
<div class="a" style="left:894.0px;top:116.2px;width:66.0px;height:9.0px;background:#3a3a3a;"></div>
<div class="a" style="left:933.0px;top:118.0px;width:27.0px;height:7.2px;background:#4d4d4d;"></div>
<svg style="left:900.0px;top:117.0px" width="60" height="8" viewBox="0 0 60 8" fill="none" stroke="#cfcfcf" stroke-width="1" ><path d="M3 2.400l.9 1.200.9-1.200z" fill="#888" stroke="none"/><rect x="11.300" y="2" width="4.400" height="3.400" stroke="#777" stroke-width=".5"/><rect x="22" y="2" width="4.400" height="3.400" stroke="#777" stroke-width=".5"/><rect x="34.600" y="2" width="3.800" height="3.800" rx=".8" stroke="#ddd" stroke-width=".7"/></svg>
<span class="t" style="left:941.70px;top:119.85px;transform:scale(0.1691);color:#d0d0d0;">Color Set</span>
<div class="a" style="left:900.3px;top:126.5px;width:41.4px;height:8.3px;background:#6e6e6e;"></div>
<span class="t" style="left:909.20px;top:128.15px;transform:scale(0.2214);color:#d8d8d8;">Vari Tone</span>
<svg style="left:935.0px;top:127.5px" width="26" height="7" viewBox="0 0 26 7" fill="none" stroke="#cfcfcf" stroke-width="1" ><path d="M2.200 2.200l1.300 1.500 1.300-1.500" stroke="#ddd" stroke-width=".6"/><path d="M10 5l2.800-2.800M12.800 2.200a1.300 1.300 0 101 1" stroke="#bbb" stroke-width=".8"/><path d="M20.500 1.200h3.200v4.600h-3.200z" stroke="#ccc" stroke-width=".7"/></svg>
<div class="a" style="left:900.8px;top:136.2px;width:6.3px;height:6.5px;background:#6aa5d8;"></div>
<div class="a" style="left:907.9px;top:136.2px;width:6.3px;height:6.5px;background:#2f5f96;"></div>
<div class="a" style="left:915.0px;top:136.2px;width:6.3px;height:6.5px;background:#b0407a;"></div>
<div class="a" style="left:922.1px;top:136.2px;width:6.3px;height:6.5px;background:#b06030;"></div>
<div class="a" style="left:929.2px;top:136.2px;width:6.3px;height:6.5px;background:#a89a30;"></div>
<div class="a" style="left:936.3px;top:136.2px;width:6.3px;height:6.5px;background:#2a8a20;outline:0.7px solid #f0c8c0;"></div>
<div class="a" style="left:943.4px;top:136.2px;width:6.3px;height:6.5px;background:#7a38a8;"></div>
<div class="a" style="left:950.5px;top:136.2px;width:6.3px;height:6.5px;background:#a85a28;"></div>
<div class="a" style="left:900.8px;top:143.7px;width:6.2px;height:5.6px;background:#000;"></div>
<svg style="left:900.0px;top:174.0px" width="60" height="8" viewBox="0 0 60 8" fill="none" stroke="#cfcfcf" stroke-width="1" ><circle cx="1.700" cy="3.700" r="1" fill="#d02020" stroke="none"/><circle cx="14.200" cy="3.700" r="1" fill="#20b020" stroke="none"/><circle cx="25.800" cy="3.700" r="1" fill="#2030d0" stroke="none"/><path d="M35 1.500h2.400l1 1v3.300H35zM45.500 5.500h3M47 1.200c-1.200 1-1.500 2.500-1 4M47 1.200c1.200 1 1.500 2.500 1 4M55.400 2h2.800v3.800h-2.800zM55 2h3.600" stroke="#bbb" stroke-width=".6"/></svg>
<div class="a" style="left:894.0px;top:180.3px;width:66.0px;height:10.6px;background:#3a3a3a;"></div>
<div class="a" style="left:908.3px;top:182.5px;width:21.0px;height:8.4px;background:#4d4d4d;"></div>
<svg style="left:900.0px;top:182.0px" width="60" height="9" viewBox="0 0 60 9" fill="none" stroke="#cfcfcf" stroke-width="1" ><path d="M3.300 3l.9 1.200.9-1.200z" fill="#888" stroke="none"/><circle cx="13.800" cy="5" r="2" stroke="#ddd" stroke-width=".7"/></svg>
<span class="t" style="left:919.20px;top:185.39px;transform:scale(0.1659);color:#d0d0d0;">Layer</span>
<span class="t" style="left:931.00px;top:185.26px;transform:scale(0.1775);color:#777;">Sear</span>
<span class="t" style="left:942.50px;top:184.63px;transform:scale(0.2323);color:#777;">Hist</span>
<div class="a" style="left:900.3px;top:191.5px;width:14.4px;height:8.8px;background:#6e6e6e;"></div>
<div class="a" style="left:916.3px;top:191.5px;width:14.5px;height:8.8px;background:#6e6e6e;"></div>
<svg style="left:900.0px;top:191.0px" width="60" height="10" viewBox="0 0 60 10" fill="none" stroke="#cfcfcf" stroke-width="1" ><rect x="1.700" y="2.400" width="5" height="5" rx=".8" stroke="#999" stroke-width=".6"/><path d="M10 4.200l1.300 1.500 1.300-1.500M26 4.200l1.300 1.500 1.300-1.500" stroke="#ddd" stroke-width=".6"/><path d="M33 4.400l1-1.200 1 1.200 1-1.200 1 1.200 1-1.200 1 1.200 1-1.200 1 1.200 1-1.200 1 1.200 1-1.200 1 1.200 1-1.200 1 1.200" stroke="#fff" stroke-width="1.500"/><path d="M48.200 1.500v6.500" stroke="#ddd" stroke-width=".6"/></svg>
<span class="t" style="left:919.00px;top:193.53px;transform:scale(0.2151);color:#bbb;">No</span>
<span class="t" style="left:950.50px;top:192.74px;transform:scale(0.2398);color:#c8c8c8;">100</span>
<svg style="left:0.0px;top:0.0px" width="960" height="534" viewBox="0 0 960 534" fill="none" stroke="#cfcfcf" stroke-width="1" ><g transform="translate(912.8,205.300)"><rect x="-1.600" y="-1.600" width="3.200" height="3.200" fill="#bdbdbd" stroke="none"/><path d="M-2.600 -2.600l5.200 5.200" stroke="#888" stroke-width=".5" stroke-dasharray=".8 .6"/></g><g transform="translate(923.3,205.300)"><path d="M-2 -2.200h4M0 -2.200v4.400M-1.600 2.200h3.200" stroke="#bdbdbd" stroke-width=".8"/></g><g transform="translate(933.7,205.300)"><rect x="-1.800" y="-.6" width="3.600" height="2.800" fill="#bdbdbd" stroke="none"/><path d="M-1 -.6v-1a1 1 0 012 0v1" stroke="#bdbdbd" stroke-width=".6"/></g><g transform="translate(944.2,205.300)"><path d="M-2 -2l4 4M2 -2l-4 4" stroke="#9a9a9a" stroke-width=".6" stroke-dasharray="1 .6"/></g><g transform="translate(955.0,205.300)"><path d="M-2 -2.200h4M0 -2.200v4.400M-1.600 2.200h3.200" stroke="#bdbdbd" stroke-width=".8"/></g><g transform="translate(905,215.300)"><path d="M-2.200 -2.400v4.400h4.400" stroke="#c8c8c8" stroke-width=".8"/><circle cx="-1" cy="2.300" r=".7" fill="#c8c8c8" stroke="none"/></g><g transform="translate(915,215.300)"><path d="M-2.600 -1.400h5.200v3.600h-5.200z" fill="#c8c8c8" stroke="none"/><path d="M-1.600 -1.400v-1M0 -1.400v-1M1.600 -1.400v-1" stroke="#c8c8c8" stroke-width=".6"/><circle cx="2" cy="2" r="1.100" fill="#4a4a4a" stroke="#c8c8c8" stroke-width=".4"/></g><g transform="translate(925.3,215.300)"><rect x="-2.400" y="-.8" width="3.400" height="3.400" stroke="#c8c8c8" stroke-width=".6"/><rect x="-.8" y="-2.400" width="3.400" height="3.400" stroke="#c8c8c8" stroke-width=".6"/></g><g transform="translate(935.8,215.300)"><circle cx="-.8" cy=".6" r="1.900" stroke="#c8c8c8" stroke-width=".6"/><circle cx=".9" cy="-.7" r="1.900" stroke="#c8c8c8" stroke-width=".6"/></g><g transform="translate(946.7,215.300)"><rect x="-2.800" y="-2.600" width="5.600" height="5.200" rx=".6" fill="#e8e8e8" stroke="none"/><circle r="1.500" fill="#4a4a4a" stroke="none"/></g><g transform="translate(957.5,215.300)"><path d="M-1.600 -2.400v4.600h3" stroke="#c8c8c8" stroke-width=".8"/></g></svg>
<div class="a" style="left:900.0px;top:221.0px;width:60.0px;height:11.9px;background:#4a4a4a;border-top:0.7px solid #383838"></div>
<span class="t" style="left:939.20px;top:222.37px;transform:scale(0.1856);color:#c8c8c8;">100 % No</span>
<span class="t" style="left:939.20px;top:227.62px;transform:scale(0.1900);color:#c8c8c8;">7</span>
<div class="a" style="left:900.0px;top:232.9px;width:60.0px;height:11.9px;background:#4a4a4a;border-top:0.7px solid #383838"></div>
<span class="t" style="left:939.20px;top:234.23px;transform:scale(0.1884);color:#c8c8c8;">100 % Nor</span>
<span class="t" style="left:939.20px;top:239.52px;transform:scale(0.1900);color:#c8c8c8;">6</span>
<div class="a" style="left:900.0px;top:244.8px;width:60.0px;height:11.9px;background:#4a4a4a;border-top:0.7px solid #383838"></div>
<span class="t" style="left:939.20px;top:246.13px;transform:scale(0.1884);color:#c8c8c8;">100 % Nor</span>
<span class="t" style="left:939.20px;top:251.42px;transform:scale(0.1900);color:#c8c8c8;">5</span>
<div class="a" style="left:900.0px;top:256.7px;width:60.0px;height:11.9px;background:#4a4a4a;border-top:0.7px solid #383838"></div>
<span class="t" style="left:939.20px;top:258.07px;transform:scale(0.1856);color:#c8c8c8;">100 % No</span>
<span class="t" style="left:939.20px;top:263.31px;transform:scale(0.1900);color:#c8c8c8;">4</span>
<div class="a" style="left:900.0px;top:268.6px;width:60.0px;height:11.9px;background:#4a4a4a;border-top:0.7px solid #383838"></div>
<span class="t" style="left:939.20px;top:269.97px;transform:scale(0.1856);color:#c8c8c8;">100 % No</span>
<span class="t" style="left:939.20px;top:275.21px;transform:scale(0.1900);color:#c8c8c8;">3</span>
<div class="a" style="left:900.0px;top:280.5px;width:60.0px;height:11.9px;background:#4a4a4a;border-top:0.7px solid #383838"></div>
<span class="t" style="left:946.00px;top:281.77px;transform:scale(0.2028);color:#c8c8c8;">100 %</span>
<span class="t" style="left:946.00px;top:287.31px;transform:scale(0.1900);color:#c8c8c8;">2</span>
<div class="a" style="left:900.0px;top:292.4px;width:60.0px;height:11.9px;background:#4a4a4a;border-top:0.7px solid #383838"></div>
<span class="t" style="left:939.20px;top:293.77px;transform:scale(0.1856);color:#c8c8c8;">100 % No</span>
<span class="t" style="left:939.20px;top:299.01px;transform:scale(0.1900);color:#c8c8c8;">Folder 1</span>
<div class="a" style="left:900.0px;top:304.3px;width:60.0px;height:11.9px;background:#4a4a4a;border-top:0.7px solid #383838"></div>
<span class="t" style="left:946.00px;top:305.57px;transform:scale(0.2028);color:#c8c8c8;">100 %</span>
<span class="t" style="left:946.00px;top:311.11px;transform:scale(0.1900);color:#c8c8c8;">1 Cop</span>
<div class="a" style="left:900.0px;top:316.2px;width:60.0px;height:11.9px;background:#4a4a4a;border-top:0.7px solid #383838"></div>
<div class="a" style="left:935.5px;top:316.8px;width:24.5px;height:11.1px;background:#6b7aa2;"></div>
<span class="t" style="left:946.00px;top:317.47px;transform:scale(0.2028);color:#dde3f0;">100 %</span>
<span class="t" style="left:945.00px;top:323.01px;transform:scale(0.1900);color:#dde3f0;">Layer</span>
<div class="a" style="left:900.0px;top:328.1px;width:60.0px;height:11.9px;background:#4a4a4a;border-top:0.7px solid #383838"></div>
<span class="t" style="left:946.00px;top:329.37px;transform:scale(0.2028);color:#c8c8c8;">100 %</span>
<span class="t" style="left:946.00px;top:334.91px;transform:scale(0.1900);color:#c8c8c8;">1</span>
<div class="a" style="left:900.0px;top:340.0px;width:60.0px;height:11.9px;background:#4a4a4a;border-top:0.7px solid #383838"></div>
<span class="t" style="left:939.20px;top:341.37px;transform:scale(0.1856);color:#c8c8c8;">100 % No</span>
<span class="t" style="left:939.20px;top:346.61px;transform:scale(0.1900);color:#c8c8c8;">sumbnail</span>
<div class="a" style="left:900.0px;top:351.9px;width:60.0px;height:11.9px;background:#4a4a4a;border-top:0.7px solid #383838"></div>
<span class="t" style="left:946.00px;top:357.42px;transform:scale(0.2155);color:#c8c8c8;">Paper</span>
<div class="a" style="left:900.0px;top:363.8px;width:60.0px;height:0.7px;background:#383838;"></div>
<svg style="left:0.0px;top:0.0px" width="960" height="534" viewBox="0 0 960 534" fill="none" stroke="#cfcfcf" stroke-width="1" ><g transform="translate(904.2,226.95)"><ellipse rx="2" ry="1.700" stroke="#3a3a3a" stroke-width=".6"/></g><g transform="translate(914.2,226.95)"><path d="M-1.600 -1.400h2.200l1 1v2h-3.200z" stroke="#3a3a3a" stroke-width=".6"/></g><path d="M922.900 225.45l1.300 1.500-1.300 1.500" stroke="#ccc" stroke-width=".6"/><path d="M928.300 229.55v-4.600h1.200v1h1.200v-1h1.200v1h1.200v-1h1.400v4.600z" fill="#e0e0e0" stroke="none"/><g transform="translate(904.2,238.85)"><ellipse rx="2" ry="1.700" stroke="#3a3a3a" stroke-width=".6"/></g><g transform="translate(914.2,238.85)"><path d="M-1.600 -1.400h2.200l1 1v2h-3.200z" stroke="#3a3a3a" stroke-width=".6"/></g><path d="M922.900 237.35l1.300 1.500-1.300 1.500" stroke="#ccc" stroke-width=".6"/><path d="M928.300 241.45v-4.600h1.200v1h1.200v-1h1.200v1h1.200v-1h1.400v4.600z" fill="#e0e0e0" stroke="none"/><g transform="translate(904.2,250.75)"><ellipse rx="2" ry="1.700" stroke="#3a3a3a" stroke-width=".6"/></g><g transform="translate(914.2,250.75)"><path d="M-1.600 -1.400h2.200l1 1v2h-3.200z" stroke="#3a3a3a" stroke-width=".6"/></g><path d="M922.900 249.25l1.300 1.500-1.300 1.500" stroke="#ccc" stroke-width=".6"/><path d="M928.300 253.35v-4.600h1.200v1h1.200v-1h1.200v1h1.200v-1h1.400v4.600z" fill="#e0e0e0" stroke="none"/><g transform="translate(904.2,262.65)"><ellipse rx="2" ry="1.700" stroke="#3a3a3a" stroke-width=".6"/></g><g transform="translate(914.2,262.65)"><path d="M-1.600 -1.400h2.200l1 1v2h-3.200z" stroke="#3a3a3a" stroke-width=".6"/></g><path d="M922.900 261.15l1.300 1.500-1.300 1.500" stroke="#ccc" stroke-width=".6"/><path d="M928.300 265.25v-4.600h1.200v1h1.200v-1h1.200v1h1.200v-1h1.400v4.600z" fill="#e0e0e0" stroke="none"/><g transform="translate(904.2,274.55)"><ellipse rx="2" ry="1.700" stroke="#3a3a3a" stroke-width=".6"/></g><g transform="translate(914.2,274.55)"><path d="M-1.600 -1.400h2.200l1 1v2h-3.200z" stroke="#3a3a3a" stroke-width=".6"/></g><path d="M922.900 273.05l1.300 1.500-1.300 1.500" stroke="#ccc" stroke-width=".6"/><path d="M928.300 277.15v-4.600h1.200v1h1.200v-1h1.200v1h1.200v-1h1.400v4.600z" fill="#e0e0e0" stroke="none"/><g transform="translate(904.2,286.45)"><ellipse rx="2" ry="1.700" stroke="#3a3a3a" stroke-width=".6"/></g><g transform="translate(914.2,286.45)"><path d="M-1.600 -1.400h2.200l1 1v2h-3.200z" stroke="#3a3a3a" stroke-width=".6"/></g><rect x="920.800" y="283.10" width="12.900" height="6.600" fill="#5a5a5a" stroke="none"/><path d="M921.600 286.70l1-1.200 1 1.200 1-1.200 1 1.200 1-1.200 1 1.200 1-1.200 1 1.200 1-1.200 1 1.200 1-1.200 1 1.200" stroke="#fff" stroke-width="1.700"/><path d="M921 283.70h12.500" stroke="#ddd" stroke-width=".5"/><rect x="938" y="282.10" width="6" height="5.400" fill="#ececec" stroke="none"/><path d="M939.300 286.70v-3.600l2 1.800 2-1.800M941.300 284.90l2 1.800" stroke="#444" stroke-width=".7"/><g transform="translate(904.2,298.35)"><ellipse rx="2" ry="1.700" stroke="#3a3a3a" stroke-width=".6"/></g><g transform="translate(914.2,298.35)"><path d="M-1.600 -1.400h2.200l1 1v2h-3.200z" stroke="#3a3a3a" stroke-width=".6"/></g><path d="M922.900 296.85l1.300 1.500-1.300 1.500" stroke="#ccc" stroke-width=".6"/><path d="M928.300 300.95v-4.600h1.200v1h1.200v-1h1.200v1h1.200v-1h1.400v4.600z" fill="#e0e0e0" stroke="none"/><g transform="translate(904.2,310.25)"><ellipse rx="2" ry="1.700" stroke="#3a3a3a" stroke-width=".6"/></g><g transform="translate(914.2,310.25)"><path d="M-1.600 -1.400h2.200l1 1v2h-3.200z" stroke="#3a3a3a" stroke-width=".6"/></g><rect x="920.800" y="306.90" width="12.900" height="6.600" fill="#5a5a5a" stroke="none"/><path d="M921.600 310.50l1-1.200 1 1.200 1-1.200 1 1.200 1-1.200 1 1.200 1-1.200 1 1.200 1-1.200 1 1.200 1-1.200 1 1.200" stroke="#fff" stroke-width="1.700"/><path d="M921 307.50h12.500" stroke="#ddd" stroke-width=".5"/><rect x="938" y="305.90" width="6" height="5.400" fill="#ececec" stroke="none"/><path d="M939.300 310.50v-3.600l2 1.800 2-1.800M941.300 308.70l2 1.800" stroke="#444" stroke-width=".7"/><g transform="translate(904.2,322.15)"><path d="M-2.400 0c1-1.600 3.800-1.600 4.800 0-1 1.600-3.800 1.600-4.800 0z" fill="#e8e8e8" stroke="none"/><circle r=".8" fill="#444" stroke="none"/></g><g transform="translate(914.2,322.15)"><path d="M-2 2l3.600-4" stroke="#e8e8e8" stroke-width=".9"/></g><rect x="919.600" y="317.00" width="15" height="10.50" stroke="#cfd6e6" stroke-width=".6" fill="#555"/><rect x="920.800" y="318.80" width="12.900" height="6.600" fill="#5a5a5a" stroke="none"/><path d="M921.600 322.40l1-1.200 1 1.200 1-1.200 1 1.200 1-1.200 1 1.200 1-1.200 1 1.200 1-1.200 1 1.200 1-1.200 1 1.200" stroke="#fff" stroke-width="1.700"/><path d="M921 319.40h12.500" stroke="#ddd" stroke-width=".5"/><rect x="938" y="317.80" width="6" height="5.400" fill="#ececec" stroke="none"/><path d="M939.300 322.40v-3.600l2 1.800 2-1.800M941.300 320.60l2 1.800" stroke="#444" stroke-width=".7"/><g transform="translate(904.2,334.05)"><path d="M-2.400 0c1-1.600 3.800-1.600 4.800 0-1 1.600-3.800 1.600-4.800 0z" fill="#e8e8e8" stroke="none"/><circle r=".8" fill="#444" stroke="none"/></g><g transform="translate(914.2,334.05)"><path d="M-1.600 -1.400h2.200l1 1v2h-3.200z" stroke="#3a3a3a" stroke-width=".6"/></g><rect x="920.800" y="330.70" width="12.900" height="6.600" fill="#5a5a5a" stroke="none"/><path d="M921.600 334.30l1-1.200 1 1.200 1-1.200 1 1.200 1-1.200 1 1.200 1-1.200 1 1.200 1-1.200 1 1.200 1-1.200 1 1.200" stroke="#fff" stroke-width="1.700"/><path d="M921 331.30h12.500" stroke="#ddd" stroke-width=".5"/><rect x="938" y="329.70" width="6" height="5.400" fill="#ececec" stroke="none"/><path d="M939.300 334.30v-3.600l2 1.800 2-1.800M941.300 332.50l2 1.800" stroke="#444" stroke-width=".7"/><g transform="translate(904.2,345.95)"><ellipse rx="2" ry="1.700" stroke="#3a3a3a" stroke-width=".6"/></g><g transform="translate(914.2,345.95)"><path d="M-1.600 -1.400h2.200l1 1v2h-3.200z" stroke="#3a3a3a" stroke-width=".6"/></g><path d="M922.900 344.45l1.300 1.500-1.300 1.500" stroke="#ccc" stroke-width=".6"/><path d="M928.300 348.55v-4.600h1.200v1h1.200v-1h1.200v1h1.200v-1h1.400v4.600z" fill="#e0e0e0" stroke="none"/><g transform="translate(904.2,357.85)"><path d="M-2.400 0c1-1.600 3.800-1.600 4.800 0-1 1.600-3.800 1.600-4.800 0z" fill="#e8e8e8" stroke="none"/><circle r=".8" fill="#444" stroke="none"/></g><g transform="translate(914.2,357.85)"><path d="M-1.600 -1.400h2.200l1 1v2h-3.200z" stroke="#3a3a3a" stroke-width=".6"/></g><rect x="920.800" y="353.70" width="12.900" height="8" fill="#fff" stroke="none"/><rect x="938" y="353.50" width="6" height="5.400" fill="#ececec" stroke="none"/><path d="M939.800 358.30v-4M942 358.30v-4" stroke="#555" stroke-width=".7"/><path d="M909.500 221v142.8M919 221v142.8" stroke="#3a3a3a" stroke-width=".6"/></svg>
<svg width="960" height="534" viewBox="0 0 960 534" style="left:0;top:0" fill="none" stroke="#2b2b2b" stroke-linecap="round" stroke-linejoin="round">
<defs><g id="fig"><clipPath id="cA"><rect x="0" y="0" width="960" height="120"/></clipPath><g clip-path="url(#cA)"><g transform="translate(240,70) scale(0.16667)" stroke-width="7.50"><path d="M238.0 540.0C234.2 530.0 223.8 503.3 215.0 480.0C206.2 456.7 193.7 426.7 185.0 400.0C176.3 373.3 167.5 344.2 163.0 320.0C158.5 295.8 156.8 275.8 158.0 255.0C159.2 234.2 163.0 212.8 170.0 195.0C177.0 177.2 186.7 163.0 200.0 148.0C213.3 133.0 231.7 117.0 250.0 105.0C268.3 93.0 288.3 83.5 310.0 76.0C331.7 68.5 356.7 61.3 380.0 60.0C403.3 58.7 428.3 63.0 450.0 68.0C471.7 73.0 491.7 79.7 510.0 90.0C528.3 100.3 545.0 114.2 560.0 130.0C575.0 145.8 586.7 163.3 600.0 185.0C613.3 206.7 628.3 234.2 640.0 260.0C651.7 285.8 662.0 311.7 670.0 340.0C678.0 368.3 683.7 396.7 688.0 430.0C692.3 463.3 694.7 521.7 696.0 540.0" stroke-width="8.10"/><path d="M222.0 183.0C217.7 191.7 203.0 215.5 196.0 235.0C189.0 254.5 183.3 281.7 180.0 300.0C176.7 318.3 176.7 337.5 176.0 345.0"/><path d="M268.0 97.0C276.7 96.3 303.8 91.7 320.0 93.0C336.2 94.3 353.3 99.3 365.0 105.0C376.7 110.7 385.8 123.3 390.0 127.0"/><path d="M398.0 110.0C403.3 106.3 417.7 93.7 430.0 88.0C442.3 82.3 465.0 78.0 472.0 76.0"/><path d="M385.0 155.0C386.7 167.5 391.8 205.8 395.0 230.0C398.2 254.2 405.2 280.3 404.0 300.0C402.8 319.7 394.3 332.2 388.0 348.0C381.7 363.8 369.7 387.2 366.0 395.0"/><path d="M415.0 140.0C424.2 145.0 450.8 153.3 470.0 170.0C489.2 186.7 513.0 217.5 530.0 240.0C547.0 262.5 565.0 294.2 572.0 305.0"/><path d="M440.0 200.0C448.3 210.0 475.0 238.3 490.0 260.0C505.0 281.7 520.3 307.5 530.0 330.0C539.7 352.5 545.5 376.7 548.0 395.0C550.5 413.3 545.5 432.5 545.0 440.0"/><path d="M404.0 300.0C410.0 305.8 427.3 324.7 440.0 335.0C452.7 345.3 473.3 357.5 480.0 362.0"/><path d="M480.0 340.0C485.0 346.7 501.7 366.7 510.0 380.0C518.3 393.3 526.7 413.3 530.0 420.0"/><path d="M490.0 345.0C496.7 352.5 520.3 375.8 530.0 390.0C539.7 404.2 545.0 423.3 548.0 430.0"/><path d="M582.0 320.0C579.3 327.5 568.3 350.0 566.0 365.0C563.7 380.0 565.2 399.5 568.0 410.0C570.8 420.5 579.3 433.0 583.0 428.0C586.7 423.0 590.2 398.0 590.0 380.0C589.8 362.0 583.3 330.0 582.0 320.0"/><path d="M372.0 402.0C380.0 398.0 403.7 385.0 420.0 378.0C436.3 371.0 458.7 363.3 470.0 360.0C481.3 356.7 485.0 358.3 488.0 358.0"/><path d="M403.0 437.0C405.8 432.5 411.3 416.5 420.0 410.0C428.7 403.5 443.3 401.0 455.0 398.0C466.7 395.0 484.2 393.0 490.0 392.0"/><path d="M403.0 440.0C405.5 442.5 411.0 452.0 418.0 455.0C425.0 458.0 436.7 459.7 445.0 458.0C453.3 456.3 461.3 452.7 468.0 445.0C474.7 437.3 481.3 420.8 485.0 412.0C488.7 403.2 489.2 395.3 490.0 392.0"/><path d="M428.0 408.0C427.0 411.3 420.7 421.7 422.0 428.0C423.3 434.3 430.3 443.7 436.0 446.0C441.7 448.3 450.7 446.3 456.0 442.0C461.3 437.7 467.3 427.0 468.0 420.0C468.7 413.0 461.3 403.3 460.0 400.0"/><path d="M243.0 452.0C247.5 450.3 259.7 443.5 270.0 442.0C280.3 440.5 295.8 439.7 305.0 443.0C314.2 446.3 321.7 458.8 325.0 462.0" stroke-width="9.60"/><path d="M262.0 470.0C265.8 468.7 276.7 462.7 285.0 462.0C293.3 461.3 305.0 463.0 312.0 466.0C319.0 469.0 327.0 475.3 327.0 480.0C327.0 484.7 319.0 491.2 312.0 494.0C305.0 496.8 292.8 498.0 285.0 497.0C277.2 496.0 268.8 492.5 265.0 488.0C261.2 483.5 262.5 473.0 262.0 470.0"/><path d="M243.0 408.0L250.0 440.0"/><path d="M275.0 400.0L262.0 440.0"/><path d="M322.0 388.0C318.0 394.2 303.3 415.5 298.0 425.0C292.7 434.5 291.3 441.7 290.0 445.0"/><path d="M338.0 395.0L318.0 435.0"/><path d="M357.0 385.0C353.8 391.7 341.7 414.2 338.0 425.0C334.3 435.8 335.5 445.8 335.0 450.0"/><path d="M362.0 395.0L350.0 440.0"/><path d="M228.0 470.0C230.0 478.3 236.3 508.3 240.0 520.0C243.7 531.7 248.3 536.7 250.0 540.0"/><path d="M222.0 455.0L230.0 500.0"/></g></g>
<clipPath id="cJ"><rect x="0" y="120" width="960" height="53"/></clipPath><g clip-path="url(#cJ)"><g transform="translate(260,120) scale(0.10482)" stroke-width="11.92"><path d="M62.0 -5.0C64.2 9.2 68.7 49.2 75.0 80.0C81.3 110.8 89.2 145.0 100.0 180.0C110.8 215.0 128.0 259.2 140.0 290.0C152.0 320.8 162.8 344.7 172.0 365.0C181.2 385.3 191.2 404.2 195.0 412.0"/><path d="M90.0 -5.0C90.8 4.2 93.7 34.2 95.0 50.0C96.3 65.8 97.5 83.3 98.0 90.0"/><path d="M165.0 235.0C166.2 245.8 168.7 279.2 172.0 300.0C175.3 320.8 180.7 341.7 185.0 360.0C189.3 378.3 195.8 401.7 198.0 410.0"/><path d="M190.0 295.0C196.3 310.0 217.0 359.2 228.0 385.0C239.0 410.8 249.3 428.8 256.0 450.0C262.7 471.2 266.0 501.7 268.0 512.0"/><path d="M203.0 310.0C208.3 319.2 225.7 348.8 235.0 365.0C244.3 381.2 248.8 392.8 259.0 407.0C269.2 421.2 280.7 435.7 296.0 450.0C311.3 464.3 331.8 479.8 351.0 493.0C370.2 506.2 401.0 523.0 411.0 529.0"/><path d="M195.0 228.0C202.5 225.8 224.2 217.0 240.0 215.0C255.8 213.0 279.2 212.2 290.0 216.0C300.8 219.8 302.5 234.3 305.0 238.0" stroke-width="18.13"/><path d="M225.0 285.0C227.5 281.5 231.7 268.8 240.0 264.0C248.3 259.2 263.3 256.2 275.0 256.0C286.7 255.8 301.2 258.2 310.0 263.0C318.8 267.8 328.0 277.7 328.0 285.0C328.0 292.3 318.8 302.0 310.0 307.0C301.2 312.0 286.7 314.8 275.0 315.0C263.3 315.2 248.3 313.0 240.0 308.0C231.7 303.0 227.5 288.8 225.0 285.0"/><path d="M262.0 268.0C261.0 270.8 255.3 279.3 256.0 285.0C256.7 290.7 261.0 298.2 266.0 302.0C271.0 305.8 279.7 308.7 286.0 308.0C292.3 307.3 300.7 303.3 304.0 298.0C307.3 292.7 307.3 282.0 306.0 276.0C304.7 270.0 297.7 264.3 296.0 262.0" stroke-width="7.63"/><path d="M195.0 180.0L200.0 232.0" stroke-width="6.68"/><path d="M232.0 215.0L242.0 250.0" stroke-width="6.68"/><path d="M258.0 212.0L262.0 240.0" stroke-width="6.68"/><path d="M250.0 160.0L235.0 212.0" stroke-width="6.68"/><path d="M320.0 145.0C314.2 153.3 293.3 182.8 285.0 195.0C276.7 207.2 272.5 214.2 270.0 218.0" stroke-width="7.63"/><path d="M345.0 155.0L310.0 218.0" stroke-width="7.63"/><path d="M375.0 140.0C370.0 150.0 350.8 184.7 345.0 200.0C339.2 215.3 340.8 226.7 340.0 232.0" stroke-width="7.63"/><path d="M385.0 152.0C381.7 162.5 369.2 200.0 365.0 215.0C360.8 230.0 360.8 237.5 360.0 242.0" stroke-width="7.63"/><path d="M448.0 -5.0C444.2 5.8 434.3 35.8 425.0 60.0C415.7 84.2 400.3 120.3 392.0 140.0C383.7 159.7 377.8 171.7 375.0 178.0"/><path d="M445.0 0.0C452.5 8.3 473.3 35.8 490.0 50.0C506.7 64.2 526.7 75.0 545.0 85.0C563.3 95.0 590.8 105.8 600.0 110.0"/><path d="M400.0 165.0C411.7 158.3 445.8 136.7 470.0 125.0C494.2 113.3 527.0 101.2 545.0 95.0C563.0 88.8 572.5 89.2 578.0 88.0"/><path d="M450.0 217.0C455.0 211.2 466.7 191.2 480.0 182.0C493.3 172.8 512.5 167.3 530.0 162.0C547.5 156.7 575.8 152.0 585.0 150.0"/><path d="M450.0 220.0C453.3 224.2 460.0 239.7 470.0 245.0C480.0 250.3 497.5 254.2 510.0 252.0C522.5 249.8 533.3 244.3 545.0 232.0C556.7 219.7 573.3 191.7 580.0 178.0C586.7 164.3 584.2 154.7 585.0 150.0"/><path d="M515.0 167.0C520.0 170.0 540.0 177.0 545.0 185.0C550.0 193.0 550.0 206.7 545.0 215.0C540.0 223.3 524.7 234.5 515.0 235.0C505.3 235.5 491.7 226.3 487.0 218.0C482.3 209.7 482.3 193.5 487.0 185.0C491.7 176.5 510.3 170.0 515.0 167.0"/><path d="M385.0 340.0C387.5 346.7 398.3 368.3 400.0 380.0C401.7 391.7 388.3 405.0 395.0 410.0C401.7 415.0 432.5 410.0 440.0 410.0"/><path d="M440.0 480.0C448.3 476.7 475.0 467.2 490.0 460.0C505.0 452.8 519.0 445.3 530.0 437.0C541.0 428.7 551.7 414.5 556.0 410.0"/><path d="M485.0 496.0L515.0 486.0"/><path d="M755.0 250.0C751.2 258.3 742.5 280.0 732.0 300.0C721.5 320.0 707.8 345.0 692.0 370.0C676.2 395.0 655.3 422.7 637.0 450.0C618.7 477.3 591.2 520.0 582.0 534.0"/><path d="M727.0 25.0C724.5 37.5 712.8 71.7 712.0 100.0C711.2 128.3 720.3 179.2 722.0 195.0"/><path d="M745.0 35.0C747.8 50.8 761.7 104.2 762.0 130.0C762.3 155.8 753.7 178.3 747.0 190.0C740.3 201.7 726.2 198.3 722.0 200.0"/><path d="M632.0 -5.0C636.2 7.5 649.5 44.2 657.0 70.0C664.5 95.8 672.8 123.3 677.0 150.0C681.2 176.7 681.2 216.7 682.0 230.0"/><path d="M572.0 62.0C579.5 70.0 606.2 95.3 617.0 110.0C627.8 124.7 631.2 136.7 637.0 150.0C642.8 163.3 649.5 183.3 652.0 190.0"/><path d="M575.0 60.0C579.2 67.5 587.5 90.0 600.0 105.0C612.5 120.0 635.3 129.5 650.0 150.0C664.7 170.5 681.7 215.0 688.0 228.0"/><path d="M682.0 90.0C685.3 100.0 695.3 130.8 702.0 150.0C708.7 169.2 718.7 195.8 722.0 205.0"/><path d="M742.0 10.0C745.7 30.0 759.7 92.5 764.0 130.0C768.3 167.5 769.3 214.7 768.0 235.0C766.7 255.3 758.0 249.2 756.0 252.0"/><path d="M752.0 250.0C748.7 258.3 738.3 278.3 732.0 300.0C725.7 321.7 715.7 351.7 714.0 380.0C712.3 408.3 718.8 448.7 722.0 470.0C725.2 491.3 731.2 501.7 733.0 508.0"/><path d="M760.0 258.0C759.0 273.3 756.7 319.7 754.0 350.0C751.3 380.3 747.3 413.7 744.0 440.0C740.7 466.3 735.7 496.7 734.0 508.0"/><path d="M852.0 -5.0C856.5 12.5 869.8 62.5 879.0 100.0C888.2 137.5 899.8 178.3 907.0 220.0C914.2 261.7 918.3 308.3 922.0 350.0C925.7 391.7 928.5 442.5 929.0 470.0C929.5 497.5 925.7 507.5 925.0 515.0"/></g></g>
<clipPath id="cB"><rect x="0" y="173" width="400" height="63"/></clipPath><g clip-path="url(#cB)"><g transform="translate(240,150) scale(0.16667)" stroke-width="7.50"><path d="M215.0 -30.0C217.2 -18.3 223.5 21.3 228.0 40.0C232.5 58.7 239.7 75.0 242.0 82.0"/><path d="M228.0 -20.0C231.7 -11.7 242.2 12.5 250.0 30.0C257.8 47.5 268.0 63.3 275.0 85.0C282.0 106.7 287.8 132.5 292.0 160.0C296.2 187.5 298.7 235.0 300.0 250.0"/><path d="M245.0 0.0C247.8 7.5 252.8 29.2 262.0 45.0C271.2 60.8 286.8 80.8 300.0 95.0C313.2 109.2 327.8 120.3 341.0 130.0C354.2 139.7 366.3 146.0 379.0 153.0C391.7 160.0 405.5 167.2 417.0 172.0C428.5 176.8 439.2 182.0 448.0 182.0C456.8 182.0 460.5 180.7 470.0 172.0C479.5 163.3 493.3 145.3 505.0 130.0C516.7 114.7 530.0 95.0 540.0 80.0C550.0 65.0 558.3 53.3 565.0 40.0C571.7 26.7 577.5 6.7 580.0 0.0"/><path d="M368.0 38.0C368.7 42.0 372.3 55.3 372.0 62.0C371.7 68.7 362.2 75.0 366.0 78.0C369.8 81.0 390.2 79.7 395.0 80.0"/><path d="M395.0 122.0C400.8 120.0 420.5 114.0 430.0 110.0C439.5 106.0 445.7 102.2 452.0 98.0C458.3 93.8 465.3 87.2 468.0 85.0"/><path d="M425.0 132.0L445.0 125.0"/><path d="M301 259L325 173L324 250L347 169L341 233L370 166L361 211L391 169L387 194L403 174L406 211"/><path d="M430.0 215.0C432.5 222.8 439.2 244.2 445.0 262.0C450.8 279.8 461.7 312.0 465.0 322.0"/><path d="M540.0 140.0C536.7 151.7 528.3 183.3 520.0 210.0C511.7 236.7 499.0 280.8 490.0 300.0C481.0 319.2 470.0 320.8 466.0 325.0"/><path d="M305.0 275.0C317.5 278.7 353.3 289.0 380.0 297.0C406.7 305.0 450.8 318.7 465.0 323.0"/><path d="M466.0 323.0C478.3 318.5 514.3 304.7 540.0 296.0C565.7 287.3 599.2 277.3 620.0 271.0C640.8 264.7 657.5 260.2 665.0 258.0"/><path d="M695.0 -10.0C695.5 6.7 696.5 67.7 698.0 90.0C699.5 112.3 703.5 111.8 704.0 124.0C704.5 136.2 701.5 156.5 701.0 163.0"/><path d="M701 163L690 129L687 163L673 138L670 180L656 146L653 183L634 143L628 194L608 174L600 214L589 180L572 222"/><path d="M572.0 222.0C573.8 214.0 580.7 190.3 583.0 174.0C585.3 157.7 586.8 138.0 586.0 124.0C585.2 110.0 579.3 95.7 578.0 90.0"/><path d="M560.0 50.0C561.7 58.3 566.7 85.0 570.0 100.0C573.3 115.0 578.3 133.3 580.0 140.0"/><path d="M300.0 237.0C291.7 238.5 265.0 242.8 250.0 246.0C235.0 249.2 221.7 248.7 210.0 256.0C198.3 263.3 190.0 275.7 180.0 290.0C170.0 304.3 160.0 323.3 150.0 342.0C140.0 360.7 130.0 380.7 120.0 402.0C110.0 423.3 100.0 448.0 90.0 470.0C80.0 492.0 65.0 523.3 60.0 534.0"/><path d="M255.0 246.0C258.5 249.3 276.0 255.0 276.0 266.0C276.0 277.0 263.5 293.0 255.0 312.0C246.5 331.0 234.2 357.8 225.0 380.0C215.8 402.2 207.8 421.7 200.0 445.0C192.2 468.3 182.0 504.2 178.0 520.0C174.0 535.8 176.3 536.7 176.0 540.0"/><path d="M210.0 345.0C210.8 350.8 215.8 367.5 215.0 380.0C214.2 392.5 206.7 413.3 205.0 420.0"/><path d="M300.0 270.0C300.0 280.0 297.5 310.0 300.0 330.0C302.5 350.0 307.5 371.7 315.0 390.0C322.5 408.3 332.5 425.8 345.0 440.0C357.5 454.2 375.8 467.2 390.0 475.0C404.2 482.8 415.0 486.2 430.0 487.0C445.0 487.8 461.7 485.3 480.0 480.0C498.3 474.7 522.5 465.0 540.0 455.0C557.5 445.0 571.7 434.2 585.0 420.0C598.3 405.8 609.2 388.3 620.0 370.0C630.8 351.7 640.0 333.0 650.0 310.0C660.0 287.0 671.7 251.2 680.0 232.0C688.3 212.8 696.7 201.2 700.0 195.0"/><path d="M420.0 435.0C422.0 440.8 427.7 469.2 432.0 470.0C436.3 470.8 440.0 447.5 446.0 440.0C452.0 432.5 464.3 427.5 468.0 425.0"/><path d="M432.0 470.0L430.0 487.0"/><path d="M675.0 178.0C682.5 180.0 700.8 187.0 720.0 190.0C739.2 193.0 770.0 192.3 790.0 196.0C810.0 199.7 825.0 203.8 840.0 212.0C855.0 220.2 866.7 232.0 880.0 245.0C893.3 258.0 903.3 269.2 920.0 290.0C936.7 310.8 970.0 356.7 980.0 370.0"/><path d="M715.0 200.0C712.5 210.0 701.7 236.7 700.0 260.0C698.3 283.3 700.8 311.7 705.0 340.0C709.2 368.3 717.5 403.3 725.0 430.0C732.5 456.7 742.8 482.7 750.0 500.0C757.2 517.3 765.0 528.3 768.0 534.0"/><path d="M710.0 242.0C715.0 239.3 729.7 230.0 740.0 226.0C750.3 222.0 766.7 219.3 772.0 218.0"/><path d="M795.0 400.0C790.8 408.3 777.2 433.3 770.0 450.0C762.8 466.7 755.7 488.3 752.0 500.0C748.3 511.7 748.7 516.7 748.0 520.0"/><path d="M793.0 400.0C800.8 410.0 821.3 436.7 840.0 460.0C858.7 483.3 894.2 526.7 905.0 540.0"/><path d="M832.0 470.0L810.0 534.0"/></g></g>
<clipPath id="cI"><rect x="400" y="0" width="560" height="236"/></clipPath><g clip-path="url(#cI)"><g transform="translate(330,160) scale(0.16667)" stroke-width="7.50"><path d="M400.0 257.0C406.7 265.0 423.0 284.5 440.0 305.0C457.0 325.5 481.3 355.0 502.0 380.0C522.7 405.0 542.7 428.3 564.0 455.0C585.3 481.7 619.0 525.8 630.0 540.0"/></g></g>
<clipPath id="cC"><rect x="0" y="236" width="300" height="80"/></clipPath><g clip-path="url(#cC)"><g transform="translate(150,230) scale(0.16667)" stroke-width="7.50"><path d="M635.0 -10.0C627.2 5.0 602.2 53.3 588.0 80.0C573.8 106.7 563.0 128.3 550.0 150.0C537.0 171.7 523.3 193.3 510.0 210.0C496.7 226.7 483.3 236.7 470.0 250.0C456.7 263.3 441.7 275.0 430.0 290.0C418.3 305.0 410.0 321.7 400.0 340.0C390.0 358.3 380.8 378.3 370.0 400.0C359.2 421.7 346.3 446.7 335.0 470.0C323.7 493.3 307.5 528.3 302.0 540.0"/><path d="M720.0 165.0C715.0 170.8 701.7 184.2 690.0 200.0C678.3 215.8 665.0 236.7 650.0 260.0C635.0 283.3 618.3 315.0 600.0 340.0C581.7 365.0 560.0 386.7 540.0 410.0C520.0 433.3 498.7 458.3 480.0 480.0C461.3 501.7 436.7 530.0 428.0 540.0"/><path d="M727.0 -10.0C724.5 0.0 714.8 31.7 712.0 50.0C709.2 68.3 707.8 81.7 710.0 100.0C712.2 118.3 718.3 143.3 725.0 160.0C731.7 176.7 739.2 187.5 750.0 200.0C760.8 212.5 773.3 226.7 790.0 235.0C806.7 243.3 830.0 248.3 850.0 250.0C870.0 251.7 890.8 247.2 910.0 245.0C929.2 242.8 955.8 238.3 965.0 237.0"/><path d="M780.0 235.0C782.5 244.2 789.2 267.5 795.0 290.0C800.8 312.5 809.2 343.3 815.0 370.0C820.8 396.7 826.5 421.7 830.0 450.0C833.5 478.3 835.0 525.0 836.0 540.0"/><path d="M805.0 322.0C815.8 323.7 843.3 330.7 870.0 332.0C896.7 333.3 949.2 330.3 965.0 330.0"/><path d="M880.0 390.0C881.7 400.0 887.7 425.0 890.0 450.0C892.3 475.0 893.3 525.0 894.0 540.0"/></g></g>
<clipPath id="cD"><rect x="300" y="236" width="660" height="80"/></clipPath><g clip-path="url(#cD)"><g transform="translate(300,230) scale(0.16667)" stroke-width="7.50"><path d="M0.0 245.0C10.0 243.8 40.0 237.5 60.0 238.0C80.0 238.5 100.0 244.7 120.0 248.0C140.0 251.3 158.3 257.7 180.0 258.0C201.7 258.3 227.0 254.3 250.0 250.0C273.0 245.7 306.7 235.0 318.0 232.0"/><path d="M0.0 335.0C16.7 335.0 66.7 336.7 100.0 335.0C133.3 333.3 166.7 329.2 200.0 325.0C233.3 320.8 272.5 314.2 300.0 310.0C327.5 305.8 354.2 301.7 365.0 300.0"/><path d="M467.0 -10.0C464.2 1.7 456.2 36.7 450.0 60.0C443.8 83.3 438.3 105.0 430.0 130.0C421.7 155.0 410.0 185.0 400.0 210.0C390.0 235.0 376.0 264.2 370.0 280.0C364.0 295.8 364.3 290.0 364.0 305.0C363.7 320.0 364.5 347.5 368.0 370.0C371.5 392.5 376.3 419.2 385.0 440.0C393.7 460.8 409.5 481.3 420.0 495.0C430.5 508.7 443.3 517.5 448.0 522.0"/><path d="M392.0 -10.0C391.0 -1.7 383.8 27.3 386.0 40.0C388.2 52.7 396.0 61.5 405.0 66.0C414.0 70.5 431.2 72.2 440.0 67.0C448.8 61.8 453.3 47.5 458.0 35.0C462.7 22.5 466.3 -0.8 468.0 -8.0"/><path d="M392.0 20.0C393.0 22.7 394.8 29.3 398.0 36.0C401.2 42.7 405.3 54.5 411.0 60.0C416.7 65.5 428.5 67.5 432.0 69.0"/><path d="M490.0 -5.0C501.0 7.5 531.0 44.2 556.0 70.0C581.0 95.8 612.7 121.7 640.0 150.0C667.3 178.3 706.7 225.0 720.0 240.0"/><path d="M707.0 -5.0C716.8 5.8 745.8 35.8 766.0 60.0C786.2 84.2 809.0 115.0 828.0 140.0C847.0 165.0 867.2 190.8 880.0 210.0C892.8 229.2 901.3 240.0 905.0 255.0C908.7 270.0 909.5 284.2 902.0 300.0C894.5 315.8 878.7 333.3 860.0 350.0C841.3 366.7 816.7 380.0 790.0 400.0C763.3 420.0 729.2 446.7 700.0 470.0C670.8 493.3 629.2 528.3 615.0 540.0"/><path d="M720.0 240.0C725.0 236.3 737.5 223.0 750.0 218.0C762.5 213.0 787.5 211.3 795.0 210.0"/><path d="M720.0 240.0C716.7 248.3 710.0 270.0 700.0 290.0C690.0 310.0 676.7 336.7 660.0 360.0C643.3 383.3 618.3 410.8 600.0 430.0C581.7 449.2 570.0 465.8 550.0 475.0C530.0 484.2 501.7 481.3 480.0 485.0C458.3 488.7 430.0 495.0 420.0 497.0"/><path d="M80.0 340.0C83.3 350.0 92.5 378.3 100.0 400.0C107.5 421.7 119.8 446.7 125.0 470.0C130.2 493.3 130.0 528.3 131.0 540.0"/><path d="M225.0 360.0C228.3 371.7 236.3 400.0 245.0 430.0C253.7 460.0 271.7 521.7 277.0 540.0"/><path d="M420.0 497.0C425.0 500.5 446.7 512.5 450.0 518.0C453.3 523.5 441.7 528.0 440.0 530.0" stroke-width="9.00"/></g></g>
<clipPath id="cE"><rect x="0" y="316" width="155" height="80"/><rect x="215" y="316" width="85" height="80"/><rect x="155" y="316" width="60" height="19"/><rect x="155" y="390" width="60" height="6"/></clipPath><g clip-path="url(#cE)"><g transform="translate(150,310) scale(0.16667)" stroke-width="7.50"><path d="M333.0 -6.0C327.3 6.7 314.5 44.0 299.0 70.0C283.5 96.0 256.5 125.8 240.0 150.0C223.5 174.2 206.7 204.2 200.0 215.0"/><path d="M478.0 -6.0C468.3 6.7 439.7 45.7 420.0 70.0C400.3 94.3 375.0 123.0 360.0 140.0C345.0 157.0 335.0 166.7 330.0 172.0"/><path d="M836.0 -6.0C834.2 8.3 828.5 50.7 825.0 80.0C821.5 109.3 817.2 140.0 815.0 170.0C812.8 200.0 813.2 231.7 812.0 260.0C810.8 288.3 810.0 314.2 808.0 340.0C806.0 365.8 805.5 391.7 800.0 415.0C794.5 438.3 783.0 459.2 775.0 480.0C767.0 500.8 755.8 530.0 752.0 540.0"/><path d="M894.0 -6.0C895.0 8.3 896.5 51.5 900.0 80.0C903.5 108.5 912.5 150.8 915.0 165.0"/><path d="M815.0 172.0C825.8 172.0 855.0 173.7 880.0 172.0C905.0 170.3 950.8 163.7 965.0 162.0"/><path d="M800.0 420.0C811.7 423.3 842.5 431.7 870.0 440.0C897.5 448.3 949.2 465.0 965.0 470.0"/><path d="M915.0 378.0L965.0 406.0"/></g></g>
<clipPath id="cM"><rect x="155" y="335" width="60" height="55"/></clipPath><g clip-path="url(#cM)"><g transform="translate(155,335) scale(0.10288)" stroke-width="12.15"><path d="M350.0 -8.0C341.7 6.7 316.7 55.3 300.0 80.0C283.3 104.7 266.7 121.7 250.0 140.0C233.3 158.3 209.2 177.5 200.0 190.0C190.8 202.5 200.0 203.3 195.0 215.0C190.0 226.7 182.5 239.2 170.0 260.0C157.5 280.8 135.0 318.3 120.0 340.0C105.0 361.7 90.3 376.7 80.0 390.0C69.7 403.3 60.5 411.7 58.0 420.0C55.5 428.3 59.7 436.7 65.0 440.0C70.3 443.3 80.0 444.2 90.0 440.0C100.0 435.8 115.0 421.7 125.0 415.0C135.0 408.3 145.8 402.5 150.0 400.0"/><path d="M150.0 400.0C146.7 406.7 136.3 426.7 130.0 440.0C123.7 453.3 114.5 470.8 112.0 480.0C109.5 489.2 111.2 492.5 115.0 495.0C118.8 497.5 126.7 499.2 135.0 495.0C143.3 490.8 154.2 485.8 165.0 470.0C175.8 454.2 190.0 423.3 200.0 400.0C210.0 376.7 217.5 349.2 225.0 330.0C232.5 310.8 241.7 292.5 245.0 285.0"/><path d="M245.0 290.0C243.3 300.0 238.8 328.3 235.0 350.0C231.2 371.7 225.3 400.0 222.0 420.0C218.7 440.0 215.3 458.3 215.0 470.0C214.7 481.7 215.8 487.5 220.0 490.0C224.2 492.5 232.5 491.7 240.0 485.0C247.5 478.3 257.5 465.8 265.0 450.0C272.5 434.2 280.0 410.0 285.0 390.0C290.0 370.0 293.3 340.0 295.0 330.0"/><path d="M295.0 330.0C295.0 338.3 293.3 363.3 295.0 380.0C296.7 396.7 300.8 420.0 305.0 430.0C309.2 440.0 315.0 441.7 320.0 440.0C325.0 438.3 332.5 431.7 335.0 420.0C337.5 408.3 336.7 390.0 335.0 370.0C333.3 350.0 326.7 311.7 325.0 300.0"/><path d="M335.0 410.0C340.0 410.0 356.7 412.5 365.0 410.0C373.3 407.5 380.8 406.7 385.0 395.0C389.2 383.3 388.3 357.5 390.0 340.0C391.7 322.5 391.7 305.0 395.0 290.0C398.3 275.0 405.0 262.5 410.0 250.0C415.0 237.5 422.5 220.8 425.0 215.0"/><path d="M240.0 290.0C242.5 283.3 248.3 260.3 255.0 250.0C261.7 239.7 270.8 230.5 280.0 228.0C289.2 225.5 302.5 228.8 310.0 235.0C317.5 241.2 322.0 255.0 325.0 265.0C328.0 275.0 327.5 290.0 328.0 295.0"/><path d="M245.0 290.0C251.7 291.7 271.2 299.2 285.0 300.0C298.8 300.8 320.8 295.8 328.0 295.0"/><path d="M405.0 95.0C405.0 104.2 403.3 130.8 405.0 150.0C406.7 169.2 412.5 194.2 415.0 210.0C417.5 225.8 422.5 232.5 420.0 245.0C417.5 257.5 403.3 278.3 400.0 285.0"/><path d="M526.0 -8.0C516.7 1.7 483.5 30.3 470.0 50.0C456.5 69.7 450.8 90.0 445.0 110.0C439.2 130.0 438.3 152.5 435.0 170.0C431.7 187.5 426.7 207.5 425.0 215.0"/></g></g>
<clipPath id="cF"><rect x="300" y="316" width="660" height="80"/></clipPath><g clip-path="url(#cF)"><g transform="translate(300,310) scale(0.16667)" stroke-width="7.50"><path d="M0.0 170.0C16.7 167.5 66.7 161.7 100.0 155.0C133.3 148.3 166.7 139.2 200.0 130.0C233.3 120.8 270.0 110.0 300.0 100.0C330.0 90.0 358.3 78.3 380.0 70.0C401.7 61.7 421.7 53.3 430.0 50.0"/><path d="M125.0 -5.0C125.8 4.2 127.5 34.2 130.0 50.0C132.5 65.8 138.3 83.3 140.0 90.0"/><path d="M258.0 -5.0C261.3 4.2 274.7 32.5 278.0 50.0C281.3 67.5 278.0 91.7 278.0 100.0"/><path d="M415.0 -5.0C419.2 0.8 433.3 22.5 440.0 30.0C446.7 37.5 456.7 35.8 455.0 40.0C453.3 44.2 442.5 49.2 430.0 55.0C417.5 60.8 394.2 68.3 380.0 75.0C365.8 81.7 354.2 88.3 345.0 95.0C335.8 101.7 327.5 109.2 325.0 115.0C322.5 120.8 325.8 127.5 330.0 130.0C334.2 132.5 338.3 134.2 350.0 130.0C361.7 125.8 385.0 110.8 400.0 105.0C415.0 99.2 438.3 91.7 440.0 95.0C441.7 98.3 420.0 113.3 410.0 125.0C400.0 136.7 388.0 154.2 380.0 165.0C372.0 175.8 363.7 184.2 362.0 190.0C360.3 195.8 365.3 200.0 370.0 200.0C374.7 200.0 381.7 198.3 390.0 190.0C398.3 181.7 410.0 160.0 420.0 150.0C430.0 140.0 441.7 135.0 450.0 130.0C458.3 125.0 469.2 116.7 470.0 120.0C470.8 123.3 460.0 138.3 455.0 150.0C450.0 161.7 444.2 177.5 440.0 190.0C435.8 202.5 430.0 217.0 430.0 225.0C430.0 233.0 435.8 238.0 440.0 238.0C444.2 238.0 450.0 234.7 455.0 225.0C460.0 215.3 464.2 193.3 470.0 180.0C475.8 166.7 483.3 153.3 490.0 145.0C496.7 136.7 507.5 127.5 510.0 130.0C512.5 132.5 506.7 148.3 505.0 160.0C503.3 171.7 500.8 189.2 500.0 200.0C499.2 210.8 498.3 219.2 500.0 225.0C501.7 230.8 506.3 236.7 510.0 235.0C513.7 233.3 518.7 225.8 522.0 215.0C525.3 204.2 526.2 183.3 530.0 170.0C533.8 156.7 536.7 147.5 545.0 135.0C553.3 122.5 567.5 108.3 580.0 95.0C592.5 81.7 600.8 71.7 620.0 55.0C639.2 38.3 682.5 5.0 695.0 -5.0"/><path d="M545.0 135.0C550.8 140.8 569.2 154.2 580.0 170.0C590.8 185.8 601.7 206.7 610.0 230.0C618.3 253.3 625.3 281.7 630.0 310.0C634.7 338.3 637.2 371.7 638.0 400.0C638.8 428.3 636.5 456.7 635.0 480.0C633.5 503.3 630.0 530.0 629.0 540.0"/><path d="M400.0 245.0C393.3 254.2 371.7 280.8 360.0 300.0C348.3 319.2 339.2 338.3 330.0 360.0C320.8 381.7 311.7 406.7 305.0 430.0C298.3 453.3 293.5 481.7 290.0 500.0C286.5 518.3 285.0 533.3 284.0 540.0"/><path d="M290.0 500.0C298.3 496.3 318.3 483.3 340.0 478.0C361.7 472.7 393.3 467.7 420.0 468.0C446.7 468.3 476.7 473.8 500.0 480.0C523.3 486.2 542.5 495.3 560.0 505.0C577.5 514.7 597.5 532.5 605.0 538.0"/><path d="M15.0 380.0C25.8 385.8 55.8 404.2 80.0 415.0C104.2 425.8 135.0 436.7 160.0 445.0C185.0 453.3 212.5 460.0 230.0 465.0C247.5 470.0 254.2 475.5 265.0 475.0C275.8 474.5 290.0 464.2 295.0 462.0"/><path d="M0.0 445.0C11.7 449.2 48.3 460.0 70.0 470.0C91.7 480.0 111.7 493.7 130.0 505.0C148.3 516.3 171.7 532.5 180.0 538.0"/><path d="M265.0 475.0C260.8 480.8 247.2 499.5 240.0 510.0C232.8 520.5 225.0 533.3 222.0 538.0"/><path d="M0.0 100.0C1.7 106.7 6.7 128.7 10.0 140.0C13.3 151.3 18.3 163.3 20.0 168.0"/></g></g>
<clipPath id="cG"><rect x="0" y="396" width="960" height="138"/></clipPath><g clip-path="url(#cG)"><g transform="translate(230,390) scale(0.16667)" stroke-width="7.50"><path d="M297.0 -6.0C289.2 16.7 264.5 85.7 250.0 130.0C235.5 174.3 223.3 215.0 210.0 260.0C196.7 305.0 182.5 355.8 170.0 400.0C157.5 444.2 140.8 504.2 135.0 525.0"/><path d="M625.0 75.0C615.8 95.8 590.8 154.2 570.0 200.0C549.2 245.8 521.7 305.0 500.0 350.0C478.3 395.0 455.8 438.3 440.0 470.0C424.2 501.7 412.5 525.0 405.0 540.0C397.5 555.0 396.7 556.7 395.0 560.0"/><path d="M500.0 0.0C510.0 5.0 539.2 17.5 560.0 30.0C580.8 42.5 614.2 67.5 625.0 75.0"/><path d="M625.0 75.0C630.8 67.5 650.5 43.2 660.0 30.0C669.5 16.8 678.3 1.7 682.0 -4.0"/></g></g>
<clipPath id="cH"><rect x="0" y="396" width="960" height="138"/></clipPath><g clip-path="url(#cH)"><g transform="translate(310,390) scale(0.16667)" stroke-width="7.50"><path d="M236.0 -6.0C234.2 1.7 229.0 14.0 225.0 40.0C221.0 66.0 215.0 106.7 212.0 150.0C209.0 193.3 208.2 250.0 207.0 300.0C205.8 350.0 205.3 411.0 205.0 450.0C204.7 489.0 205.0 520.0 205.0 534.0"/><path d="M577.0 -6.0C575.8 7.5 573.7 44.0 570.0 75.0C566.3 106.0 561.7 139.2 555.0 180.0C548.3 220.8 539.2 276.7 530.0 320.0C520.8 363.3 511.3 402.5 500.0 440.0C488.7 477.5 468.3 527.5 462.0 545.0"/><path d="M225.0 40.0C230.8 35.8 245.5 22.0 260.0 15.0C274.5 8.0 303.3 0.8 312.0 -2.0"/><path d="M430.0 0.0C440.0 3.3 471.7 11.7 490.0 20.0C508.3 28.3 527.8 40.0 540.0 50.0C552.2 60.0 559.2 75.0 563.0 80.0"/></g></g></g></defs>
<use href="#fig"/>
<use href="#fig" transform="translate(296,3)"/>
<g transform="translate(296,3)" stroke="#111"><g clip-path="url(#cI)"><g transform="translate(330,160) scale(0.16667)"><path d="M400.0 257.0C406.7 265.0 423.0 284.5 440.0 305.0C457.0 325.5 481.3 355.0 502.0 380.0C522.7 405.0 542.7 428.3 564.0 455.0C585.3 481.7 619.0 525.8 630.0 540.0" stroke-width="10.20"/></g></g><g clip-path="url(#cB)"><g transform="translate(240,150) scale(0.16667)"><path d="M675.0 178.0C682.5 180.0 700.8 187.0 720.0 190.0C739.2 193.0 770.0 192.3 790.0 196.0C810.0 199.7 825.0 203.8 840.0 212.0C855.0 220.2 866.7 232.0 880.0 245.0C893.3 258.0 903.3 269.2 920.0 290.0C936.7 310.8 970.0 356.7 980.0 370.0" stroke-width="11.40"/></g></g><g clip-path="url(#cD)"><g transform="translate(300,230) scale(0.16667)"><path d="M707.0 -5.0C716.8 5.8 745.8 35.8 766.0 60.0C786.2 84.2 809.0 115.0 828.0 140.0C847.0 165.0 867.2 190.8 880.0 210.0C892.8 229.2 901.3 240.0 905.0 255.0C908.7 270.0 909.5 284.2 902.0 300.0C894.5 315.8 878.7 333.3 860.0 350.0C841.3 366.7 816.7 380.0 790.0 400.0C763.3 420.0 729.2 446.7 700.0 470.0C670.8 493.3 629.2 528.3 615.0 540.0" stroke-width="11.40"/></g></g><g clip-path="url(#cD)"><g transform="translate(300,230) scale(0.16667)"><path d="M490.0 -5.0C501.0 7.5 531.0 44.2 556.0 70.0C581.0 95.8 612.7 121.7 640.0 150.0C667.3 178.3 706.7 225.0 720.0 240.0" stroke-width="9.00"/></g></g><g clip-path="url(#cD)"><g transform="translate(300,230) scale(0.16667)"><path d="M720.0 240.0C716.7 248.3 710.0 270.0 700.0 290.0C690.0 310.0 666.7 348.3 660.0 360.0" stroke-width="9.00"/></g></g><g clip-path="url(#cB)"><g transform="translate(240,150) scale(0.16667)"><path d="M793.0 400.0C800.8 410.0 821.3 436.7 840.0 460.0C858.7 483.3 894.2 526.7 905.0 540.0" stroke-width="8.70"/></g></g><g clip-path="url(#cB)"><g transform="translate(240,150) scale(0.16667)"><path d="M795.0 400.0C790.8 408.3 777.2 433.3 770.0 450.0C762.8 466.7 755.0 491.7 752.0 500.0" stroke-width="8.70"/></g></g></g><circle cx="709.3" cy="264.7" r="2.1" fill="#43b649" fill-opacity=".85" stroke="#7fd083" stroke-width=".5"/>
</svg>
</body></html>
